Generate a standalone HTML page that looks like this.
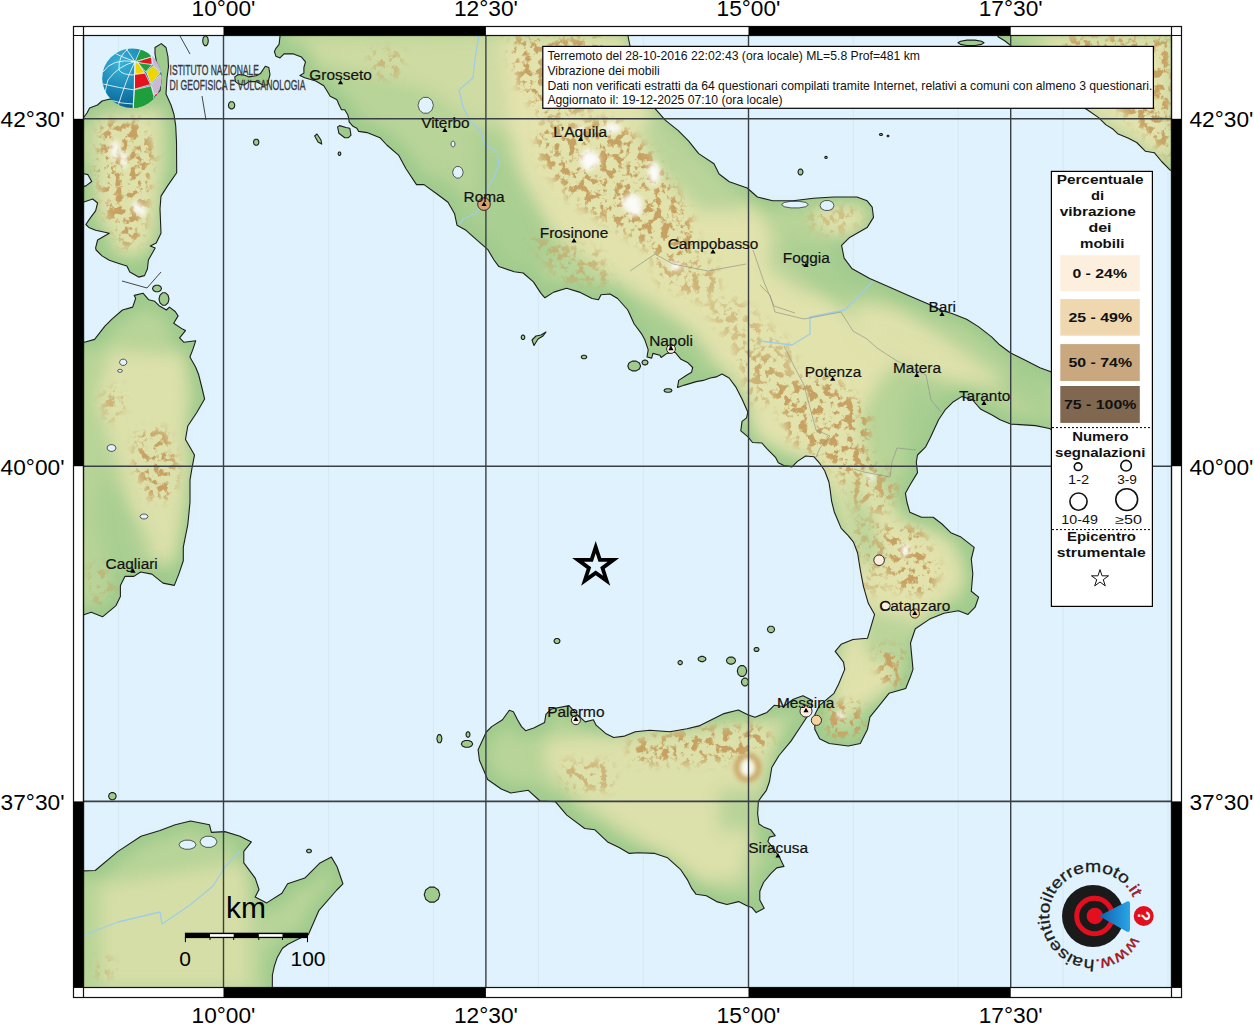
<!DOCTYPE html><html><head><meta charset="utf-8"><style>html,body{margin:0;padding:0;background:#fff;width:1254px;height:1024px;overflow:hidden}svg{position:absolute;left:0;top:0}text{font-family:"Liberation Sans",sans-serif}</style></head><body>
<svg width="1254" height="1024" viewBox="0 0 1254 1024">
<defs><clipPath id="mc"><rect x="83.5" y="35.5" width="1088" height="952"/></clipPath>
<filter id="inner" x="-5%" y="-5%" width="110%" height="110%"><feMorphology operator="erode" radius="7"/><feGaussianBlur stdDeviation="7"/></filter>
<filter id="bl3" x="-50%" y="-50%" width="200%" height="200%"><feGaussianBlur stdDeviation="2.5"/></filter><filter id="bl8" x="-50%" y="-50%" width="200%" height="200%"><feGaussianBlur stdDeviation="8"/></filter><filter id="shade" color-interpolation-filters="sRGB" x="0" y="0" width="1" height="1"><feTurbulence type="fractalNoise" baseFrequency="0.18" numOctaves="2" seed="11" result="n"/><feColorMatrix in="n" type="matrix" values="2.2 0 0 0 -0.6  2.2 0 0 0 -0.6  2.2 0 0 0 -0.6  0 0 0 0 1"/></filter><filter id="mtn" color-interpolation-filters="sRGB" x="-30%" y="-30%" width="160%" height="160%"><feGaussianBlur in="SourceAlpha" stdDeviation="5" result="b"/><feTurbulence type="fractalNoise" baseFrequency="0.13" numOctaves="4" seed="4" result="n"/><feColorMatrix in="n" type="matrix" values="0 0 0 0 0.78  0 0 0 0 0.63  0 0 0 0 0.38  8 0 0 0 -4.0" result="t"/><feComposite in="t" in2="b" operator="in"/></filter>
</defs>
<g clip-path="url(#mc)"><rect x="83" y="35" width="1090" height="954" fill="#e0f2fd"/>
<line x1="13.6" y1="35" x2="13.6" y2="988" stroke="#d6e8f0" stroke-width="1"/>
<line x1="118.5" y1="35" x2="118.5" y2="988" stroke="#d6e8f0" stroke-width="1"/>
<line x1="328.5" y1="35" x2="328.5" y2="988" stroke="#d6e8f0" stroke-width="1"/>
<line x1="433.4" y1="35" x2="433.4" y2="988" stroke="#d6e8f0" stroke-width="1"/>
<line x1="538.4" y1="35" x2="538.4" y2="988" stroke="#d6e8f0" stroke-width="1"/>
<line x1="643.3" y1="35" x2="643.3" y2="988" stroke="#d6e8f0" stroke-width="1"/>
<line x1="853.3" y1="35" x2="853.3" y2="988" stroke="#d6e8f0" stroke-width="1"/>
<line x1="958.2" y1="35" x2="958.2" y2="988" stroke="#d6e8f0" stroke-width="1"/>
<line x1="1063.2" y1="35" x2="1063.2" y2="988" stroke="#d6e8f0" stroke-width="1"/>
<line x1="1168.1" y1="35" x2="1168.1" y2="988" stroke="#d6e8f0" stroke-width="1"/>
<line x1="1273.1" y1="35" x2="1273.1" y2="988" stroke="#d6e8f0" stroke-width="1"/>
<line x1="1378.1" y1="35" x2="1378.1" y2="988" stroke="#d6e8f0" stroke-width="1"/>
<path d="M280.0,0.0 L280.0,36.4 L279.1,44.4 L276.0,48.3 L274.4,51.5 L276.0,56.3 L280.0,57.9 L284.0,53.9 L293.5,53.9 L301.5,57.1 L305.5,61.9 L303.9,67.5 L303.9,73.1 L299.9,75.5 L304.7,77.8 L315.8,81.0 L323.8,85.8 L327.8,92.2 L330.2,96.2 L336.6,99.4 L337.5,101.0 L338.9,104.6 L341.5,109.7 L344.7,109.7 L347.8,114.8 L348.8,118.6 L349.1,121.8 L353.0,126.3 L356.8,128.2 L358.7,131.4 L367.0,132.6 L380.0,137.7 L386.8,145.0 L398.8,155.4 L406.0,168.8 L416.5,184.6 L424.0,184.6 L438.0,194.7 L448.0,202.3 L454.6,213.8 L457.0,225.2 L466.0,230.3 L478.7,241.7 L487.6,249.3 L494.0,260.0 L498.9,266.6 L514.2,271.7 L523.2,273.0 L533.4,281.9 L541.0,293.4 L544.9,297.8 L553.8,292.1 L566.6,288.3 L579.3,292.1 L592.1,298.5 L598.5,299.8 L601.0,294.7 L610.0,294.0 L617.6,298.5 L627.8,310.0 L634.2,324.0 L641.8,334.2 L644.7,339.4 L648.2,349.9 L647.0,357.0 L651.7,358.1 L652.9,353.4 L659.9,355.2 L661.1,357.5 L667.0,353.4 L675.2,352.3 L681.0,359.3 L688.0,362.8 L692.7,367.5 L691.6,372.2 L685.7,375.7 L678.7,380.4 L677.5,387.4 L684.5,385.1 L696.3,381.6 L703.3,380.4 L710.3,378.0 L716.2,376.9 L722.0,374.0 L729.1,378.0 L736.1,387.4 L742.0,399.1 L747.8,412.0 L746.6,417.9 L742.0,421.4 L740.8,430.8 L747.8,436.6 L752.5,442.5 L761.9,443.0 L767.3,449.1 L775.5,457.3 L778.3,462.8 L783.8,465.5 L792.0,466.9 L797.4,461.4 L805.6,456.0 L813.8,456.7 L819.3,462.8 L824.8,471.0 L828.9,482.0 L830.2,490.2 L831.6,501.1 L834.3,512.0 L841.2,528.4 L848.0,535.3 L853.5,542.1 L857.6,553.0 L860.3,570.0 L863.5,586.6 L868.3,603.3 L874.6,614.4 L867.5,638.3 L853.0,639.5 L841.1,644.3 L835.2,651.4 L843.5,662.2 L844.7,669.4 L838.8,683.7 L834.0,693.3 L819.6,705.3 L814.8,714.8 L814.8,729.2 L819.6,738.8 L829.2,743.5 L848.3,746.0 L860.3,743.5 L867.5,729.2 L869.9,717.2 L879.4,705.3 L889.0,693.3 L905.7,688.5 L910.5,676.5 L913.0,669.4 L910.5,643.0 L915.3,628.7 L929.7,619.1 L944.0,613.2 L958.4,610.8 L968.0,614.4 L975.1,607.2 L978.6,597.1 L971.3,591.3 L972.8,573.7 L971.3,559.0 L974.2,547.4 L961.0,537.1 L950.8,532.7 L942.0,524.0 L933.2,517.3 L921.5,517.3 L909.8,512.2 L906.9,502.0 L905.4,493.2 L910.0,485.0 L917.5,472.6 L916.3,462.0 L917.5,455.0 L925.7,446.8 L930.4,437.4 L938.6,419.8 L945.6,409.3 L952.7,402.3 L962.0,396.4 L972.6,400.0 L980.8,409.3 L992.5,415.2 L1000.0,419.8 L1010.6,424.1 L1035.5,425.6 L1049.5,428.5 L1070.0,440.0 L1100.0,470.0 L1120.0,495.0 L1128.0,470.0 L1130.0,420.0 L1110.0,395.0 L1070.0,380.0 L1049.5,371.3 L1039.9,367.7 L1025.3,360.3 L1010.6,353.0 L998.9,344.2 L991.6,336.9 L978.4,326.6 L966.6,319.3 L952.0,313.5 L941.7,310.5 L928.3,304.1 L907.9,295.2 L887.5,286.3 L869.7,278.6 L851.8,268.4 L844.1,258.2 L841.6,245.4 L849.2,237.8 L867.1,227.6 L873.5,217.4 L872.2,207.2 L867.1,200.8 L856.9,197.0 L833.9,197.0 L813.5,198.2 L793.1,200.8 L772.7,200.8 L757.4,197.0 L747.2,188.0 L729.3,181.7 L719.1,174.0 L714.0,163.8 L698.7,153.6 L688.5,140.8 L678.3,130.6 L665.5,120.4 L655.3,108.9 L640.0,80.0 L630.0,46.0 L628.0,36.0 L628.0,0.0Z M998.0,0.0 L998.0,36.7 L1005.0,41.0 L1009.4,44.5 L1040.0,80.0 L1070.0,100.0 L1086.9,109.5 L1098.6,117.6 L1106.0,124.9 L1113.2,129.3 L1117.6,133.7 L1127.9,138.1 L1136.7,142.5 L1145.5,151.3 L1154.3,152.7 L1161.6,161.5 L1170.4,170.3 L1210.0,171.0 L1210.0,0.0Z M486.3,732.0 L491.7,726.6 L502.5,719.8 L509.3,710.3 L513.4,711.7 L517.5,719.8 L521.5,726.6 L525.6,730.7 L533.7,728.0 L544.6,722.5 L545.9,714.4 L551.3,709.0 L569.0,705.6 L577.1,714.4 L585.2,721.9 L593.4,719.8 L596.1,725.2 L605.6,733.4 L613.7,737.5 L624.6,736.1 L635.3,731.7 L649.7,730.2 L669.8,731.7 L687.0,728.8 L700.0,725.6 L712.0,719.6 L724.0,713.6 L738.3,710.0 L747.8,714.8 L755.0,717.2 L767.0,712.4 L774.2,705.3 L783.7,706.5 L793.3,699.3 L802.9,695.7 L812.4,700.5 L810.0,712.4 L800.5,726.8 L791.0,741.1 L779.0,755.5 L771.8,767.5 L769.4,781.8 L766.4,790.3 L762.0,796.1 L758.4,801.2 L757.6,813.7 L759.0,824.0 L763.5,826.9 L770.8,829.8 L775.2,835.7 L769.4,837.1 L767.9,841.5 L773.7,848.8 L779.6,857.6 L784.0,866.4 L776.7,867.9 L770.8,873.7 L763.5,882.5 L759.8,891.3 L759.8,900.1 L764.2,908.2 L756.2,912.6 L751.8,907.4 L747.4,906.0 L738.6,901.6 L726.9,904.5 L716.6,901.6 L706.4,895.7 L696.1,894.3 L691.7,888.4 L687.3,879.6 L680.4,869.3 L667.6,857.8 L654.8,853.4 L638.2,852.7 L629.3,853.4 L619.1,847.6 L607.6,841.9 L594.9,829.8 L584.7,828.5 L566.8,815.1 L555.3,801.7 L540.0,801.0 L528.3,790.3 L510.7,793.0 L501.2,789.0 L487.6,779.5 L483.6,770.0 L479.5,760.5 L478.1,749.7Z M40.0,342.0 L84.4,342.3 L94.6,339.4 L104.9,326.2 L112.2,318.8 L122.5,310.0 L132.7,307.1 L135.7,298.3 L134.2,295.4 L143.0,293.2 L148.8,299.8 L154.7,301.3 L159.1,305.7 L166.4,310.0 L169.4,307.1 L175.2,311.5 L178.1,315.9 L173.7,323.2 L182.5,329.1 L185.5,330.6 L179.6,337.9 L184.0,342.3 L195.7,340.8 L192.8,349.6 L189.9,357.0 L195.7,367.2 L198.6,374.5 L202.0,388.0 L204.6,399.0 L196.8,412.5 L187.8,426.0 L185.5,439.4 L194.5,455.1 L192.3,466.4 L190.0,479.8 L190.0,502.3 L187.8,524.7 L183.3,547.2 L183.3,560.7 L178.8,574.1 L174.3,585.4 L163.0,583.1 L151.9,574.1 L140.6,572.0 L133.9,576.4 L124.9,576.4 L120.4,585.4 L120.4,596.6 L116.0,605.6 L102.5,616.8 L91.2,612.3 L84.5,614.6 L40.0,614.6Z M40.0,117.0 L84.0,117.0 L87.0,113.0 L89.6,108.0 L97.5,105.0 L102.0,101.0 L110.0,99.0 L121.0,102.0 L147.0,99.0 L153.0,97.0 L160.0,90.6 L161.0,79.5 L160.0,71.5 L156.5,62.0 L155.0,54.0 L155.0,47.5 L161.3,43.6 L166.0,47.5 L168.0,57.0 L168.5,66.7 L167.0,78.0 L166.0,94.0 L171.0,105.0 L174.0,114.5 L175.7,125.7 L176.5,141.6 L176.6,157.6 L176.7,172.7 L167.9,185.4 L161.0,196.1 L160.0,208.8 L161.0,233.2 L156.2,243.0 L150.3,246.0 L155.2,247.9 L148.4,260.0 L147.4,269.0 L144.5,275.6 L138.6,277.1 L129.8,272.0 L126.9,266.1 L118.0,263.2 L109.3,260.3 L102.0,255.9 L96.1,250.0 L95.6,247.9 L97.6,240.0 L109.3,233.2 L95.6,230.3 L88.8,227.4 L85.9,224.5 L89.8,218.6 L95.6,210.8 L97.6,203.0 L92.7,199.0 L83.9,202.0 L40.0,202.0 L40.0,186.4 L83.9,186.4 L85.9,185.9 L91.7,181.5 L87.8,174.6 L83.9,173.7 L40.0,173.7Z M40.0,872.4 L95.2,870.5 L118.0,851.4 L141.0,836.2 L160.0,830.5 L175.2,824.8 L190.5,821.0 L209.5,824.8 L211.4,832.4 L224.8,831.6 L240.0,836.2 L251.4,841.9 L243.8,851.4 L243.8,862.9 L255.2,878.1 L259.0,889.5 L255.2,897.1 L266.7,902.9 L281.9,893.3 L287.6,883.8 L304.8,878.1 L320.0,862.9 L331.4,857.1 L337.1,866.7 L342.9,883.8 L336.8,890.0 L319.0,910.3 L308.3,934.7 L298.8,938.8 L288.0,944.2 L282.5,948.3 L277.1,957.8 L274.4,965.9 L272.4,975.0 L272.0,1030.0 L40.0,1030.0Z M234.8,76.9 L238.4,74.5 L244.2,75.1 L248.9,76.9 L256.0,75.7 L260.6,73.4 L265.3,66.3 L268.8,67.5 L270.0,74.5 L268.8,79.2 L267.7,85.0 L263.0,85.0 L256.0,81.6 L248.9,81.6 L244.2,85.0 L238.4,83.9 L235.4,81.6Z M208.3,40.8 L207.8,43.7 L206.4,45.6 L204.6,45.6 L203.2,43.7 L202.7,40.8 L203.2,37.9 L204.6,36.0 L206.4,36.0 L207.8,37.9Z M234.8,105.3 L234.2,107.5 L232.6,108.9 L230.6,108.9 L229.0,107.5 L228.4,105.3 L229.0,103.1 L230.6,101.7 L232.6,101.7 L234.2,103.1Z M258.9,142.2 L258.4,144.1 L257.0,145.2 L255.4,145.2 L254.0,144.1 L253.5,142.2 L254.0,140.3 L255.4,139.2 L257.0,139.2 L258.4,140.3Z M314.7,136.0 L317.0,134.0 L321.0,140.0 L321.7,144.1 L318.0,142.0Z M337.6,126.9 L339.6,125.6 L345.9,127.5 L349.8,128.2 L351.0,135.2 L348.5,137.7 L344.7,137.7 L338.9,133.3Z M340.8,153.7 L340.6,154.8 L339.9,155.4 L339.1,155.4 L338.4,154.8 L338.2,153.7 L338.4,152.6 L339.1,152.0 L339.9,152.0 L340.6,152.6Z M524.8,337.3 L524.5,338.7 L523.6,339.5 L522.4,339.5 L521.5,338.7 L521.2,337.3 L521.5,335.9 L522.4,335.1 L523.6,335.1 L524.5,335.9Z M532.0,340.0 L536.0,336.0 L541.0,335.0 L546.0,332.0 L543.0,336.0 L538.0,339.0 L534.0,345.5Z M586.8,357.0 L586.3,358.1 L584.9,358.7 L583.1,358.7 L581.7,358.1 L581.2,357.0 L581.7,355.9 L583.1,355.3 L584.9,355.3 L586.3,355.9Z M640.6,366.0 L639.4,369.0 L636.2,370.9 L632.2,370.9 L629.0,369.0 L627.8,366.0 L629.0,363.0 L632.2,361.1 L636.2,361.1 L639.4,363.0Z M648.0,362.5 L647.4,364.0 L645.9,364.9 L644.1,364.9 L642.6,364.0 L642.0,362.5 L642.6,361.0 L644.1,360.1 L645.9,360.1 L647.4,361.0Z M672.0,390.5 L671.2,391.6 L669.2,392.2 L666.8,392.2 L664.8,391.6 L664.0,390.5 L664.8,389.4 L666.8,388.8 L669.2,388.8 L671.2,389.4Z M560.0,641.0 L559.4,642.5 L557.9,643.5 L556.1,643.5 L554.6,642.5 L554.0,641.0 L554.6,639.5 L556.1,638.5 L557.9,638.5 L559.4,639.5Z M682.4,662.6 L682.0,663.8 L680.9,664.6 L679.5,664.6 L678.4,663.8 L678.0,662.6 L678.4,661.4 L679.5,660.6 L680.9,660.6 L682.0,661.4Z M706.0,659.0 L705.2,660.6 L703.2,661.6 L700.8,661.6 L698.8,660.6 L698.0,659.0 L698.8,657.4 L700.8,656.4 L703.2,656.4 L705.2,657.4Z M735.6,660.6 L734.7,662.8 L732.4,664.1 L729.6,664.1 L727.3,662.8 L726.4,660.6 L727.3,658.4 L729.6,657.1 L732.4,657.1 L734.7,658.4Z M746.7,671.0 L745.8,674.4 L743.5,676.4 L740.5,676.4 L738.2,674.4 L737.3,671.0 L738.2,667.6 L740.5,665.6 L743.5,665.6 L745.8,667.6Z M748.6,682.0 L747.9,684.4 L746.1,685.9 L743.9,685.9 L742.1,684.4 L741.4,682.0 L742.1,679.6 L743.9,678.1 L746.1,678.1 L747.9,679.6Z M759.0,649.5 L758.5,650.7 L757.3,651.4 L755.7,651.4 L754.5,650.7 L754.0,649.5 L754.5,648.3 L755.7,647.6 L757.3,647.6 L758.5,648.3Z M774.6,629.4 L773.9,631.4 L772.1,632.6 L769.9,632.6 L768.1,631.4 L767.4,629.4 L768.1,627.4 L769.9,626.2 L772.1,626.2 L773.9,627.4Z M441.9,738.7 L441.4,741.2 L440.2,742.8 L438.6,742.8 L437.4,741.2 L436.9,738.7 L437.4,736.2 L438.6,734.6 L440.2,734.6 L441.4,736.2Z M472.7,743.9 L471.6,746.0 L468.8,747.3 L465.2,747.3 L462.4,746.0 L461.3,743.9 L462.4,741.8 L465.2,740.5 L468.8,740.5 L471.6,741.8Z M470.0,734.5 L469.6,736.1 L468.6,737.2 L467.4,737.2 L466.4,736.1 L466.0,734.5 L466.4,732.9 L467.4,731.8 L468.6,731.8 L469.6,732.9Z M439.8,894.6 L438.3,899.2 L434.4,902.1 L429.6,902.1 L425.7,899.2 L424.2,894.6 L425.7,890.0 L429.6,887.1 L434.4,887.1 L438.3,890.0Z M803.0,172.0 L802.5,173.8 L801.3,174.9 L799.7,174.9 L798.5,173.8 L798.0,172.0 L798.5,170.2 L799.7,169.1 L801.3,169.1 L802.5,170.2Z M827.2,157.4 L827.0,158.0 L826.4,158.4 L825.6,158.4 L825.0,158.0 L824.8,157.4 L825.0,156.8 L825.6,156.4 L826.4,156.4 L827.0,156.8Z M882.6,134.5 L882.3,135.1 L881.5,135.5 L880.5,135.5 L879.7,135.1 L879.4,134.5 L879.7,133.9 L880.5,133.5 L881.5,133.5 L882.3,133.9Z M888.9,136.0 L888.7,136.5 L888.3,136.8 L887.7,136.8 L887.3,136.5 L887.1,136.0 L887.3,135.5 L887.7,135.2 L888.3,135.2 L888.7,135.5Z M116.2,796.2 L115.5,798.4 L113.6,799.8 L111.2,799.8 L109.3,798.4 L108.6,796.2 L109.3,794.0 L111.2,792.6 L113.6,792.6 L115.5,794.0Z M311.5,851.0 L311.0,852.1 L309.8,852.7 L308.2,852.7 L307.0,852.1 L306.5,851.0 L307.0,849.9 L308.2,849.3 L309.8,849.3 L311.0,849.9Z M161.5,288.5 L160.6,290.6 L158.4,291.8 L155.6,291.8 L153.4,290.6 L152.5,288.5 L153.4,286.4 L155.6,285.2 L158.4,285.2 L160.6,286.4Z M169.0,299.0 L168.0,302.8 L165.5,305.2 L162.5,305.2 L160.0,302.8 L159.0,299.0 L160.0,295.2 L162.5,292.8 L165.5,292.8 L168.0,295.2Z M984.0,42.8 L981.5,44.4 L975.0,45.5 L967.0,45.5 L960.5,44.4 L958.0,42.8 L960.5,41.2 L967.0,40.1 L975.0,40.1 L981.5,41.2Z M1191.0,0.0 L1190.8,0.6 L1190.3,1.0 L1189.7,1.0 L1189.2,0.6 L1189.0,0.0 L1189.2,-0.6 L1189.7,-1.0 L1190.3,-1.0 L1190.8,-0.6Z" fill="#9fcb8d"/>
<path d="M280.0,0.0 L280.0,36.4 L279.1,44.4 L276.0,48.3 L274.4,51.5 L276.0,56.3 L280.0,57.9 L284.0,53.9 L293.5,53.9 L301.5,57.1 L305.5,61.9 L303.9,67.5 L303.9,73.1 L299.9,75.5 L304.7,77.8 L315.8,81.0 L323.8,85.8 L327.8,92.2 L330.2,96.2 L336.6,99.4 L337.5,101.0 L338.9,104.6 L341.5,109.7 L344.7,109.7 L347.8,114.8 L348.8,118.6 L349.1,121.8 L353.0,126.3 L356.8,128.2 L358.7,131.4 L367.0,132.6 L380.0,137.7 L386.8,145.0 L398.8,155.4 L406.0,168.8 L416.5,184.6 L424.0,184.6 L438.0,194.7 L448.0,202.3 L454.6,213.8 L457.0,225.2 L466.0,230.3 L478.7,241.7 L487.6,249.3 L494.0,260.0 L498.9,266.6 L514.2,271.7 L523.2,273.0 L533.4,281.9 L541.0,293.4 L544.9,297.8 L553.8,292.1 L566.6,288.3 L579.3,292.1 L592.1,298.5 L598.5,299.8 L601.0,294.7 L610.0,294.0 L617.6,298.5 L627.8,310.0 L634.2,324.0 L641.8,334.2 L644.7,339.4 L648.2,349.9 L647.0,357.0 L651.7,358.1 L652.9,353.4 L659.9,355.2 L661.1,357.5 L667.0,353.4 L675.2,352.3 L681.0,359.3 L688.0,362.8 L692.7,367.5 L691.6,372.2 L685.7,375.7 L678.7,380.4 L677.5,387.4 L684.5,385.1 L696.3,381.6 L703.3,380.4 L710.3,378.0 L716.2,376.9 L722.0,374.0 L729.1,378.0 L736.1,387.4 L742.0,399.1 L747.8,412.0 L746.6,417.9 L742.0,421.4 L740.8,430.8 L747.8,436.6 L752.5,442.5 L761.9,443.0 L767.3,449.1 L775.5,457.3 L778.3,462.8 L783.8,465.5 L792.0,466.9 L797.4,461.4 L805.6,456.0 L813.8,456.7 L819.3,462.8 L824.8,471.0 L828.9,482.0 L830.2,490.2 L831.6,501.1 L834.3,512.0 L841.2,528.4 L848.0,535.3 L853.5,542.1 L857.6,553.0 L860.3,570.0 L863.5,586.6 L868.3,603.3 L874.6,614.4 L867.5,638.3 L853.0,639.5 L841.1,644.3 L835.2,651.4 L843.5,662.2 L844.7,669.4 L838.8,683.7 L834.0,693.3 L819.6,705.3 L814.8,714.8 L814.8,729.2 L819.6,738.8 L829.2,743.5 L848.3,746.0 L860.3,743.5 L867.5,729.2 L869.9,717.2 L879.4,705.3 L889.0,693.3 L905.7,688.5 L910.5,676.5 L913.0,669.4 L910.5,643.0 L915.3,628.7 L929.7,619.1 L944.0,613.2 L958.4,610.8 L968.0,614.4 L975.1,607.2 L978.6,597.1 L971.3,591.3 L972.8,573.7 L971.3,559.0 L974.2,547.4 L961.0,537.1 L950.8,532.7 L942.0,524.0 L933.2,517.3 L921.5,517.3 L909.8,512.2 L906.9,502.0 L905.4,493.2 L910.0,485.0 L917.5,472.6 L916.3,462.0 L917.5,455.0 L925.7,446.8 L930.4,437.4 L938.6,419.8 L945.6,409.3 L952.7,402.3 L962.0,396.4 L972.6,400.0 L980.8,409.3 L992.5,415.2 L1000.0,419.8 L1010.6,424.1 L1035.5,425.6 L1049.5,428.5 L1070.0,440.0 L1100.0,470.0 L1120.0,495.0 L1128.0,470.0 L1130.0,420.0 L1110.0,395.0 L1070.0,380.0 L1049.5,371.3 L1039.9,367.7 L1025.3,360.3 L1010.6,353.0 L998.9,344.2 L991.6,336.9 L978.4,326.6 L966.6,319.3 L952.0,313.5 L941.7,310.5 L928.3,304.1 L907.9,295.2 L887.5,286.3 L869.7,278.6 L851.8,268.4 L844.1,258.2 L841.6,245.4 L849.2,237.8 L867.1,227.6 L873.5,217.4 L872.2,207.2 L867.1,200.8 L856.9,197.0 L833.9,197.0 L813.5,198.2 L793.1,200.8 L772.7,200.8 L757.4,197.0 L747.2,188.0 L729.3,181.7 L719.1,174.0 L714.0,163.8 L698.7,153.6 L688.5,140.8 L678.3,130.6 L665.5,120.4 L655.3,108.9 L640.0,80.0 L630.0,46.0 L628.0,36.0 L628.0,0.0Z M998.0,0.0 L998.0,36.7 L1005.0,41.0 L1009.4,44.5 L1040.0,80.0 L1070.0,100.0 L1086.9,109.5 L1098.6,117.6 L1106.0,124.9 L1113.2,129.3 L1117.6,133.7 L1127.9,138.1 L1136.7,142.5 L1145.5,151.3 L1154.3,152.7 L1161.6,161.5 L1170.4,170.3 L1210.0,171.0 L1210.0,0.0Z M486.3,732.0 L491.7,726.6 L502.5,719.8 L509.3,710.3 L513.4,711.7 L517.5,719.8 L521.5,726.6 L525.6,730.7 L533.7,728.0 L544.6,722.5 L545.9,714.4 L551.3,709.0 L569.0,705.6 L577.1,714.4 L585.2,721.9 L593.4,719.8 L596.1,725.2 L605.6,733.4 L613.7,737.5 L624.6,736.1 L635.3,731.7 L649.7,730.2 L669.8,731.7 L687.0,728.8 L700.0,725.6 L712.0,719.6 L724.0,713.6 L738.3,710.0 L747.8,714.8 L755.0,717.2 L767.0,712.4 L774.2,705.3 L783.7,706.5 L793.3,699.3 L802.9,695.7 L812.4,700.5 L810.0,712.4 L800.5,726.8 L791.0,741.1 L779.0,755.5 L771.8,767.5 L769.4,781.8 L766.4,790.3 L762.0,796.1 L758.4,801.2 L757.6,813.7 L759.0,824.0 L763.5,826.9 L770.8,829.8 L775.2,835.7 L769.4,837.1 L767.9,841.5 L773.7,848.8 L779.6,857.6 L784.0,866.4 L776.7,867.9 L770.8,873.7 L763.5,882.5 L759.8,891.3 L759.8,900.1 L764.2,908.2 L756.2,912.6 L751.8,907.4 L747.4,906.0 L738.6,901.6 L726.9,904.5 L716.6,901.6 L706.4,895.7 L696.1,894.3 L691.7,888.4 L687.3,879.6 L680.4,869.3 L667.6,857.8 L654.8,853.4 L638.2,852.7 L629.3,853.4 L619.1,847.6 L607.6,841.9 L594.9,829.8 L584.7,828.5 L566.8,815.1 L555.3,801.7 L540.0,801.0 L528.3,790.3 L510.7,793.0 L501.2,789.0 L487.6,779.5 L483.6,770.0 L479.5,760.5 L478.1,749.7Z M40.0,342.0 L84.4,342.3 L94.6,339.4 L104.9,326.2 L112.2,318.8 L122.5,310.0 L132.7,307.1 L135.7,298.3 L134.2,295.4 L143.0,293.2 L148.8,299.8 L154.7,301.3 L159.1,305.7 L166.4,310.0 L169.4,307.1 L175.2,311.5 L178.1,315.9 L173.7,323.2 L182.5,329.1 L185.5,330.6 L179.6,337.9 L184.0,342.3 L195.7,340.8 L192.8,349.6 L189.9,357.0 L195.7,367.2 L198.6,374.5 L202.0,388.0 L204.6,399.0 L196.8,412.5 L187.8,426.0 L185.5,439.4 L194.5,455.1 L192.3,466.4 L190.0,479.8 L190.0,502.3 L187.8,524.7 L183.3,547.2 L183.3,560.7 L178.8,574.1 L174.3,585.4 L163.0,583.1 L151.9,574.1 L140.6,572.0 L133.9,576.4 L124.9,576.4 L120.4,585.4 L120.4,596.6 L116.0,605.6 L102.5,616.8 L91.2,612.3 L84.5,614.6 L40.0,614.6Z M40.0,117.0 L84.0,117.0 L87.0,113.0 L89.6,108.0 L97.5,105.0 L102.0,101.0 L110.0,99.0 L121.0,102.0 L147.0,99.0 L153.0,97.0 L160.0,90.6 L161.0,79.5 L160.0,71.5 L156.5,62.0 L155.0,54.0 L155.0,47.5 L161.3,43.6 L166.0,47.5 L168.0,57.0 L168.5,66.7 L167.0,78.0 L166.0,94.0 L171.0,105.0 L174.0,114.5 L175.7,125.7 L176.5,141.6 L176.6,157.6 L176.7,172.7 L167.9,185.4 L161.0,196.1 L160.0,208.8 L161.0,233.2 L156.2,243.0 L150.3,246.0 L155.2,247.9 L148.4,260.0 L147.4,269.0 L144.5,275.6 L138.6,277.1 L129.8,272.0 L126.9,266.1 L118.0,263.2 L109.3,260.3 L102.0,255.9 L96.1,250.0 L95.6,247.9 L97.6,240.0 L109.3,233.2 L95.6,230.3 L88.8,227.4 L85.9,224.5 L89.8,218.6 L95.6,210.8 L97.6,203.0 L92.7,199.0 L83.9,202.0 L40.0,202.0 L40.0,186.4 L83.9,186.4 L85.9,185.9 L91.7,181.5 L87.8,174.6 L83.9,173.7 L40.0,173.7Z M40.0,872.4 L95.2,870.5 L118.0,851.4 L141.0,836.2 L160.0,830.5 L175.2,824.8 L190.5,821.0 L209.5,824.8 L211.4,832.4 L224.8,831.6 L240.0,836.2 L251.4,841.9 L243.8,851.4 L243.8,862.9 L255.2,878.1 L259.0,889.5 L255.2,897.1 L266.7,902.9 L281.9,893.3 L287.6,883.8 L304.8,878.1 L320.0,862.9 L331.4,857.1 L337.1,866.7 L342.9,883.8 L336.8,890.0 L319.0,910.3 L308.3,934.7 L298.8,938.8 L288.0,944.2 L282.5,948.3 L277.1,957.8 L274.4,965.9 L272.4,975.0 L272.0,1030.0 L40.0,1030.0Z M234.8,76.9 L238.4,74.5 L244.2,75.1 L248.9,76.9 L256.0,75.7 L260.6,73.4 L265.3,66.3 L268.8,67.5 L270.0,74.5 L268.8,79.2 L267.7,85.0 L263.0,85.0 L256.0,81.6 L248.9,81.6 L244.2,85.0 L238.4,83.9 L235.4,81.6Z M208.3,40.8 L207.8,43.7 L206.4,45.6 L204.6,45.6 L203.2,43.7 L202.7,40.8 L203.2,37.9 L204.6,36.0 L206.4,36.0 L207.8,37.9Z M234.8,105.3 L234.2,107.5 L232.6,108.9 L230.6,108.9 L229.0,107.5 L228.4,105.3 L229.0,103.1 L230.6,101.7 L232.6,101.7 L234.2,103.1Z M258.9,142.2 L258.4,144.1 L257.0,145.2 L255.4,145.2 L254.0,144.1 L253.5,142.2 L254.0,140.3 L255.4,139.2 L257.0,139.2 L258.4,140.3Z M314.7,136.0 L317.0,134.0 L321.0,140.0 L321.7,144.1 L318.0,142.0Z M337.6,126.9 L339.6,125.6 L345.9,127.5 L349.8,128.2 L351.0,135.2 L348.5,137.7 L344.7,137.7 L338.9,133.3Z M340.8,153.7 L340.6,154.8 L339.9,155.4 L339.1,155.4 L338.4,154.8 L338.2,153.7 L338.4,152.6 L339.1,152.0 L339.9,152.0 L340.6,152.6Z M524.8,337.3 L524.5,338.7 L523.6,339.5 L522.4,339.5 L521.5,338.7 L521.2,337.3 L521.5,335.9 L522.4,335.1 L523.6,335.1 L524.5,335.9Z M532.0,340.0 L536.0,336.0 L541.0,335.0 L546.0,332.0 L543.0,336.0 L538.0,339.0 L534.0,345.5Z M586.8,357.0 L586.3,358.1 L584.9,358.7 L583.1,358.7 L581.7,358.1 L581.2,357.0 L581.7,355.9 L583.1,355.3 L584.9,355.3 L586.3,355.9Z M640.6,366.0 L639.4,369.0 L636.2,370.9 L632.2,370.9 L629.0,369.0 L627.8,366.0 L629.0,363.0 L632.2,361.1 L636.2,361.1 L639.4,363.0Z M648.0,362.5 L647.4,364.0 L645.9,364.9 L644.1,364.9 L642.6,364.0 L642.0,362.5 L642.6,361.0 L644.1,360.1 L645.9,360.1 L647.4,361.0Z M672.0,390.5 L671.2,391.6 L669.2,392.2 L666.8,392.2 L664.8,391.6 L664.0,390.5 L664.8,389.4 L666.8,388.8 L669.2,388.8 L671.2,389.4Z M560.0,641.0 L559.4,642.5 L557.9,643.5 L556.1,643.5 L554.6,642.5 L554.0,641.0 L554.6,639.5 L556.1,638.5 L557.9,638.5 L559.4,639.5Z M682.4,662.6 L682.0,663.8 L680.9,664.6 L679.5,664.6 L678.4,663.8 L678.0,662.6 L678.4,661.4 L679.5,660.6 L680.9,660.6 L682.0,661.4Z M706.0,659.0 L705.2,660.6 L703.2,661.6 L700.8,661.6 L698.8,660.6 L698.0,659.0 L698.8,657.4 L700.8,656.4 L703.2,656.4 L705.2,657.4Z M735.6,660.6 L734.7,662.8 L732.4,664.1 L729.6,664.1 L727.3,662.8 L726.4,660.6 L727.3,658.4 L729.6,657.1 L732.4,657.1 L734.7,658.4Z M746.7,671.0 L745.8,674.4 L743.5,676.4 L740.5,676.4 L738.2,674.4 L737.3,671.0 L738.2,667.6 L740.5,665.6 L743.5,665.6 L745.8,667.6Z M748.6,682.0 L747.9,684.4 L746.1,685.9 L743.9,685.9 L742.1,684.4 L741.4,682.0 L742.1,679.6 L743.9,678.1 L746.1,678.1 L747.9,679.6Z M759.0,649.5 L758.5,650.7 L757.3,651.4 L755.7,651.4 L754.5,650.7 L754.0,649.5 L754.5,648.3 L755.7,647.6 L757.3,647.6 L758.5,648.3Z M774.6,629.4 L773.9,631.4 L772.1,632.6 L769.9,632.6 L768.1,631.4 L767.4,629.4 L768.1,627.4 L769.9,626.2 L772.1,626.2 L773.9,627.4Z M441.9,738.7 L441.4,741.2 L440.2,742.8 L438.6,742.8 L437.4,741.2 L436.9,738.7 L437.4,736.2 L438.6,734.6 L440.2,734.6 L441.4,736.2Z M472.7,743.9 L471.6,746.0 L468.8,747.3 L465.2,747.3 L462.4,746.0 L461.3,743.9 L462.4,741.8 L465.2,740.5 L468.8,740.5 L471.6,741.8Z M470.0,734.5 L469.6,736.1 L468.6,737.2 L467.4,737.2 L466.4,736.1 L466.0,734.5 L466.4,732.9 L467.4,731.8 L468.6,731.8 L469.6,732.9Z M439.8,894.6 L438.3,899.2 L434.4,902.1 L429.6,902.1 L425.7,899.2 L424.2,894.6 L425.7,890.0 L429.6,887.1 L434.4,887.1 L438.3,890.0Z M803.0,172.0 L802.5,173.8 L801.3,174.9 L799.7,174.9 L798.5,173.8 L798.0,172.0 L798.5,170.2 L799.7,169.1 L801.3,169.1 L802.5,170.2Z M827.2,157.4 L827.0,158.0 L826.4,158.4 L825.6,158.4 L825.0,158.0 L824.8,157.4 L825.0,156.8 L825.6,156.4 L826.4,156.4 L827.0,156.8Z M882.6,134.5 L882.3,135.1 L881.5,135.5 L880.5,135.5 L879.7,135.1 L879.4,134.5 L879.7,133.9 L880.5,133.5 L881.5,133.5 L882.3,133.9Z M888.9,136.0 L888.7,136.5 L888.3,136.8 L887.7,136.8 L887.3,136.5 L887.1,136.0 L887.3,135.5 L887.7,135.2 L888.3,135.2 L888.7,135.5Z M116.2,796.2 L115.5,798.4 L113.6,799.8 L111.2,799.8 L109.3,798.4 L108.6,796.2 L109.3,794.0 L111.2,792.6 L113.6,792.6 L115.5,794.0Z M311.5,851.0 L311.0,852.1 L309.8,852.7 L308.2,852.7 L307.0,852.1 L306.5,851.0 L307.0,849.9 L308.2,849.3 L309.8,849.3 L311.0,849.9Z M161.5,288.5 L160.6,290.6 L158.4,291.8 L155.6,291.8 L153.4,290.6 L152.5,288.5 L153.4,286.4 L155.6,285.2 L158.4,285.2 L160.6,286.4Z M169.0,299.0 L168.0,302.8 L165.5,305.2 L162.5,305.2 L160.0,302.8 L159.0,299.0 L160.0,295.2 L162.5,292.8 L165.5,292.8 L168.0,295.2Z M984.0,42.8 L981.5,44.4 L975.0,45.5 L967.0,45.5 L960.5,44.4 L958.0,42.8 L960.5,41.2 L967.0,40.1 L975.0,40.1 L981.5,41.2Z M1191.0,0.0 L1190.8,0.6 L1190.3,1.0 L1189.7,1.0 L1189.2,0.6 L1189.0,0.0 L1189.2,-0.6 L1189.7,-1.0 L1190.3,-1.0 L1190.8,-0.6Z" fill="#cddca2" opacity="0.55" filter="url(#inner)"/>
<clipPath id="landclip"><path d="M280.0,0.0 L280.0,36.4 L279.1,44.4 L276.0,48.3 L274.4,51.5 L276.0,56.3 L280.0,57.9 L284.0,53.9 L293.5,53.9 L301.5,57.1 L305.5,61.9 L303.9,67.5 L303.9,73.1 L299.9,75.5 L304.7,77.8 L315.8,81.0 L323.8,85.8 L327.8,92.2 L330.2,96.2 L336.6,99.4 L337.5,101.0 L338.9,104.6 L341.5,109.7 L344.7,109.7 L347.8,114.8 L348.8,118.6 L349.1,121.8 L353.0,126.3 L356.8,128.2 L358.7,131.4 L367.0,132.6 L380.0,137.7 L386.8,145.0 L398.8,155.4 L406.0,168.8 L416.5,184.6 L424.0,184.6 L438.0,194.7 L448.0,202.3 L454.6,213.8 L457.0,225.2 L466.0,230.3 L478.7,241.7 L487.6,249.3 L494.0,260.0 L498.9,266.6 L514.2,271.7 L523.2,273.0 L533.4,281.9 L541.0,293.4 L544.9,297.8 L553.8,292.1 L566.6,288.3 L579.3,292.1 L592.1,298.5 L598.5,299.8 L601.0,294.7 L610.0,294.0 L617.6,298.5 L627.8,310.0 L634.2,324.0 L641.8,334.2 L644.7,339.4 L648.2,349.9 L647.0,357.0 L651.7,358.1 L652.9,353.4 L659.9,355.2 L661.1,357.5 L667.0,353.4 L675.2,352.3 L681.0,359.3 L688.0,362.8 L692.7,367.5 L691.6,372.2 L685.7,375.7 L678.7,380.4 L677.5,387.4 L684.5,385.1 L696.3,381.6 L703.3,380.4 L710.3,378.0 L716.2,376.9 L722.0,374.0 L729.1,378.0 L736.1,387.4 L742.0,399.1 L747.8,412.0 L746.6,417.9 L742.0,421.4 L740.8,430.8 L747.8,436.6 L752.5,442.5 L761.9,443.0 L767.3,449.1 L775.5,457.3 L778.3,462.8 L783.8,465.5 L792.0,466.9 L797.4,461.4 L805.6,456.0 L813.8,456.7 L819.3,462.8 L824.8,471.0 L828.9,482.0 L830.2,490.2 L831.6,501.1 L834.3,512.0 L841.2,528.4 L848.0,535.3 L853.5,542.1 L857.6,553.0 L860.3,570.0 L863.5,586.6 L868.3,603.3 L874.6,614.4 L867.5,638.3 L853.0,639.5 L841.1,644.3 L835.2,651.4 L843.5,662.2 L844.7,669.4 L838.8,683.7 L834.0,693.3 L819.6,705.3 L814.8,714.8 L814.8,729.2 L819.6,738.8 L829.2,743.5 L848.3,746.0 L860.3,743.5 L867.5,729.2 L869.9,717.2 L879.4,705.3 L889.0,693.3 L905.7,688.5 L910.5,676.5 L913.0,669.4 L910.5,643.0 L915.3,628.7 L929.7,619.1 L944.0,613.2 L958.4,610.8 L968.0,614.4 L975.1,607.2 L978.6,597.1 L971.3,591.3 L972.8,573.7 L971.3,559.0 L974.2,547.4 L961.0,537.1 L950.8,532.7 L942.0,524.0 L933.2,517.3 L921.5,517.3 L909.8,512.2 L906.9,502.0 L905.4,493.2 L910.0,485.0 L917.5,472.6 L916.3,462.0 L917.5,455.0 L925.7,446.8 L930.4,437.4 L938.6,419.8 L945.6,409.3 L952.7,402.3 L962.0,396.4 L972.6,400.0 L980.8,409.3 L992.5,415.2 L1000.0,419.8 L1010.6,424.1 L1035.5,425.6 L1049.5,428.5 L1070.0,440.0 L1100.0,470.0 L1120.0,495.0 L1128.0,470.0 L1130.0,420.0 L1110.0,395.0 L1070.0,380.0 L1049.5,371.3 L1039.9,367.7 L1025.3,360.3 L1010.6,353.0 L998.9,344.2 L991.6,336.9 L978.4,326.6 L966.6,319.3 L952.0,313.5 L941.7,310.5 L928.3,304.1 L907.9,295.2 L887.5,286.3 L869.7,278.6 L851.8,268.4 L844.1,258.2 L841.6,245.4 L849.2,237.8 L867.1,227.6 L873.5,217.4 L872.2,207.2 L867.1,200.8 L856.9,197.0 L833.9,197.0 L813.5,198.2 L793.1,200.8 L772.7,200.8 L757.4,197.0 L747.2,188.0 L729.3,181.7 L719.1,174.0 L714.0,163.8 L698.7,153.6 L688.5,140.8 L678.3,130.6 L665.5,120.4 L655.3,108.9 L640.0,80.0 L630.0,46.0 L628.0,36.0 L628.0,0.0Z M998.0,0.0 L998.0,36.7 L1005.0,41.0 L1009.4,44.5 L1040.0,80.0 L1070.0,100.0 L1086.9,109.5 L1098.6,117.6 L1106.0,124.9 L1113.2,129.3 L1117.6,133.7 L1127.9,138.1 L1136.7,142.5 L1145.5,151.3 L1154.3,152.7 L1161.6,161.5 L1170.4,170.3 L1210.0,171.0 L1210.0,0.0Z M486.3,732.0 L491.7,726.6 L502.5,719.8 L509.3,710.3 L513.4,711.7 L517.5,719.8 L521.5,726.6 L525.6,730.7 L533.7,728.0 L544.6,722.5 L545.9,714.4 L551.3,709.0 L569.0,705.6 L577.1,714.4 L585.2,721.9 L593.4,719.8 L596.1,725.2 L605.6,733.4 L613.7,737.5 L624.6,736.1 L635.3,731.7 L649.7,730.2 L669.8,731.7 L687.0,728.8 L700.0,725.6 L712.0,719.6 L724.0,713.6 L738.3,710.0 L747.8,714.8 L755.0,717.2 L767.0,712.4 L774.2,705.3 L783.7,706.5 L793.3,699.3 L802.9,695.7 L812.4,700.5 L810.0,712.4 L800.5,726.8 L791.0,741.1 L779.0,755.5 L771.8,767.5 L769.4,781.8 L766.4,790.3 L762.0,796.1 L758.4,801.2 L757.6,813.7 L759.0,824.0 L763.5,826.9 L770.8,829.8 L775.2,835.7 L769.4,837.1 L767.9,841.5 L773.7,848.8 L779.6,857.6 L784.0,866.4 L776.7,867.9 L770.8,873.7 L763.5,882.5 L759.8,891.3 L759.8,900.1 L764.2,908.2 L756.2,912.6 L751.8,907.4 L747.4,906.0 L738.6,901.6 L726.9,904.5 L716.6,901.6 L706.4,895.7 L696.1,894.3 L691.7,888.4 L687.3,879.6 L680.4,869.3 L667.6,857.8 L654.8,853.4 L638.2,852.7 L629.3,853.4 L619.1,847.6 L607.6,841.9 L594.9,829.8 L584.7,828.5 L566.8,815.1 L555.3,801.7 L540.0,801.0 L528.3,790.3 L510.7,793.0 L501.2,789.0 L487.6,779.5 L483.6,770.0 L479.5,760.5 L478.1,749.7Z M40.0,342.0 L84.4,342.3 L94.6,339.4 L104.9,326.2 L112.2,318.8 L122.5,310.0 L132.7,307.1 L135.7,298.3 L134.2,295.4 L143.0,293.2 L148.8,299.8 L154.7,301.3 L159.1,305.7 L166.4,310.0 L169.4,307.1 L175.2,311.5 L178.1,315.9 L173.7,323.2 L182.5,329.1 L185.5,330.6 L179.6,337.9 L184.0,342.3 L195.7,340.8 L192.8,349.6 L189.9,357.0 L195.7,367.2 L198.6,374.5 L202.0,388.0 L204.6,399.0 L196.8,412.5 L187.8,426.0 L185.5,439.4 L194.5,455.1 L192.3,466.4 L190.0,479.8 L190.0,502.3 L187.8,524.7 L183.3,547.2 L183.3,560.7 L178.8,574.1 L174.3,585.4 L163.0,583.1 L151.9,574.1 L140.6,572.0 L133.9,576.4 L124.9,576.4 L120.4,585.4 L120.4,596.6 L116.0,605.6 L102.5,616.8 L91.2,612.3 L84.5,614.6 L40.0,614.6Z M40.0,117.0 L84.0,117.0 L87.0,113.0 L89.6,108.0 L97.5,105.0 L102.0,101.0 L110.0,99.0 L121.0,102.0 L147.0,99.0 L153.0,97.0 L160.0,90.6 L161.0,79.5 L160.0,71.5 L156.5,62.0 L155.0,54.0 L155.0,47.5 L161.3,43.6 L166.0,47.5 L168.0,57.0 L168.5,66.7 L167.0,78.0 L166.0,94.0 L171.0,105.0 L174.0,114.5 L175.7,125.7 L176.5,141.6 L176.6,157.6 L176.7,172.7 L167.9,185.4 L161.0,196.1 L160.0,208.8 L161.0,233.2 L156.2,243.0 L150.3,246.0 L155.2,247.9 L148.4,260.0 L147.4,269.0 L144.5,275.6 L138.6,277.1 L129.8,272.0 L126.9,266.1 L118.0,263.2 L109.3,260.3 L102.0,255.9 L96.1,250.0 L95.6,247.9 L97.6,240.0 L109.3,233.2 L95.6,230.3 L88.8,227.4 L85.9,224.5 L89.8,218.6 L95.6,210.8 L97.6,203.0 L92.7,199.0 L83.9,202.0 L40.0,202.0 L40.0,186.4 L83.9,186.4 L85.9,185.9 L91.7,181.5 L87.8,174.6 L83.9,173.7 L40.0,173.7Z M40.0,872.4 L95.2,870.5 L118.0,851.4 L141.0,836.2 L160.0,830.5 L175.2,824.8 L190.5,821.0 L209.5,824.8 L211.4,832.4 L224.8,831.6 L240.0,836.2 L251.4,841.9 L243.8,851.4 L243.8,862.9 L255.2,878.1 L259.0,889.5 L255.2,897.1 L266.7,902.9 L281.9,893.3 L287.6,883.8 L304.8,878.1 L320.0,862.9 L331.4,857.1 L337.1,866.7 L342.9,883.8 L336.8,890.0 L319.0,910.3 L308.3,934.7 L298.8,938.8 L288.0,944.2 L282.5,948.3 L277.1,957.8 L274.4,965.9 L272.4,975.0 L272.0,1030.0 L40.0,1030.0Z M234.8,76.9 L238.4,74.5 L244.2,75.1 L248.9,76.9 L256.0,75.7 L260.6,73.4 L265.3,66.3 L268.8,67.5 L270.0,74.5 L268.8,79.2 L267.7,85.0 L263.0,85.0 L256.0,81.6 L248.9,81.6 L244.2,85.0 L238.4,83.9 L235.4,81.6Z M208.3,40.8 L207.8,43.7 L206.4,45.6 L204.6,45.6 L203.2,43.7 L202.7,40.8 L203.2,37.9 L204.6,36.0 L206.4,36.0 L207.8,37.9Z M234.8,105.3 L234.2,107.5 L232.6,108.9 L230.6,108.9 L229.0,107.5 L228.4,105.3 L229.0,103.1 L230.6,101.7 L232.6,101.7 L234.2,103.1Z M258.9,142.2 L258.4,144.1 L257.0,145.2 L255.4,145.2 L254.0,144.1 L253.5,142.2 L254.0,140.3 L255.4,139.2 L257.0,139.2 L258.4,140.3Z M314.7,136.0 L317.0,134.0 L321.0,140.0 L321.7,144.1 L318.0,142.0Z M337.6,126.9 L339.6,125.6 L345.9,127.5 L349.8,128.2 L351.0,135.2 L348.5,137.7 L344.7,137.7 L338.9,133.3Z M340.8,153.7 L340.6,154.8 L339.9,155.4 L339.1,155.4 L338.4,154.8 L338.2,153.7 L338.4,152.6 L339.1,152.0 L339.9,152.0 L340.6,152.6Z M524.8,337.3 L524.5,338.7 L523.6,339.5 L522.4,339.5 L521.5,338.7 L521.2,337.3 L521.5,335.9 L522.4,335.1 L523.6,335.1 L524.5,335.9Z M532.0,340.0 L536.0,336.0 L541.0,335.0 L546.0,332.0 L543.0,336.0 L538.0,339.0 L534.0,345.5Z M586.8,357.0 L586.3,358.1 L584.9,358.7 L583.1,358.7 L581.7,358.1 L581.2,357.0 L581.7,355.9 L583.1,355.3 L584.9,355.3 L586.3,355.9Z M640.6,366.0 L639.4,369.0 L636.2,370.9 L632.2,370.9 L629.0,369.0 L627.8,366.0 L629.0,363.0 L632.2,361.1 L636.2,361.1 L639.4,363.0Z M648.0,362.5 L647.4,364.0 L645.9,364.9 L644.1,364.9 L642.6,364.0 L642.0,362.5 L642.6,361.0 L644.1,360.1 L645.9,360.1 L647.4,361.0Z M672.0,390.5 L671.2,391.6 L669.2,392.2 L666.8,392.2 L664.8,391.6 L664.0,390.5 L664.8,389.4 L666.8,388.8 L669.2,388.8 L671.2,389.4Z M560.0,641.0 L559.4,642.5 L557.9,643.5 L556.1,643.5 L554.6,642.5 L554.0,641.0 L554.6,639.5 L556.1,638.5 L557.9,638.5 L559.4,639.5Z M682.4,662.6 L682.0,663.8 L680.9,664.6 L679.5,664.6 L678.4,663.8 L678.0,662.6 L678.4,661.4 L679.5,660.6 L680.9,660.6 L682.0,661.4Z M706.0,659.0 L705.2,660.6 L703.2,661.6 L700.8,661.6 L698.8,660.6 L698.0,659.0 L698.8,657.4 L700.8,656.4 L703.2,656.4 L705.2,657.4Z M735.6,660.6 L734.7,662.8 L732.4,664.1 L729.6,664.1 L727.3,662.8 L726.4,660.6 L727.3,658.4 L729.6,657.1 L732.4,657.1 L734.7,658.4Z M746.7,671.0 L745.8,674.4 L743.5,676.4 L740.5,676.4 L738.2,674.4 L737.3,671.0 L738.2,667.6 L740.5,665.6 L743.5,665.6 L745.8,667.6Z M748.6,682.0 L747.9,684.4 L746.1,685.9 L743.9,685.9 L742.1,684.4 L741.4,682.0 L742.1,679.6 L743.9,678.1 L746.1,678.1 L747.9,679.6Z M759.0,649.5 L758.5,650.7 L757.3,651.4 L755.7,651.4 L754.5,650.7 L754.0,649.5 L754.5,648.3 L755.7,647.6 L757.3,647.6 L758.5,648.3Z M774.6,629.4 L773.9,631.4 L772.1,632.6 L769.9,632.6 L768.1,631.4 L767.4,629.4 L768.1,627.4 L769.9,626.2 L772.1,626.2 L773.9,627.4Z M441.9,738.7 L441.4,741.2 L440.2,742.8 L438.6,742.8 L437.4,741.2 L436.9,738.7 L437.4,736.2 L438.6,734.6 L440.2,734.6 L441.4,736.2Z M472.7,743.9 L471.6,746.0 L468.8,747.3 L465.2,747.3 L462.4,746.0 L461.3,743.9 L462.4,741.8 L465.2,740.5 L468.8,740.5 L471.6,741.8Z M470.0,734.5 L469.6,736.1 L468.6,737.2 L467.4,737.2 L466.4,736.1 L466.0,734.5 L466.4,732.9 L467.4,731.8 L468.6,731.8 L469.6,732.9Z M439.8,894.6 L438.3,899.2 L434.4,902.1 L429.6,902.1 L425.7,899.2 L424.2,894.6 L425.7,890.0 L429.6,887.1 L434.4,887.1 L438.3,890.0Z M803.0,172.0 L802.5,173.8 L801.3,174.9 L799.7,174.9 L798.5,173.8 L798.0,172.0 L798.5,170.2 L799.7,169.1 L801.3,169.1 L802.5,170.2Z M827.2,157.4 L827.0,158.0 L826.4,158.4 L825.6,158.4 L825.0,158.0 L824.8,157.4 L825.0,156.8 L825.6,156.4 L826.4,156.4 L827.0,156.8Z M882.6,134.5 L882.3,135.1 L881.5,135.5 L880.5,135.5 L879.7,135.1 L879.4,134.5 L879.7,133.9 L880.5,133.5 L881.5,133.5 L882.3,133.9Z M888.9,136.0 L888.7,136.5 L888.3,136.8 L887.7,136.8 L887.3,136.5 L887.1,136.0 L887.3,135.5 L887.7,135.2 L888.3,135.2 L888.7,135.5Z M116.2,796.2 L115.5,798.4 L113.6,799.8 L111.2,799.8 L109.3,798.4 L108.6,796.2 L109.3,794.0 L111.2,792.6 L113.6,792.6 L115.5,794.0Z M311.5,851.0 L311.0,852.1 L309.8,852.7 L308.2,852.7 L307.0,852.1 L306.5,851.0 L307.0,849.9 L308.2,849.3 L309.8,849.3 L311.0,849.9Z M161.5,288.5 L160.6,290.6 L158.4,291.8 L155.6,291.8 L153.4,290.6 L152.5,288.5 L153.4,286.4 L155.6,285.2 L158.4,285.2 L160.6,286.4Z M169.0,299.0 L168.0,302.8 L165.5,305.2 L162.5,305.2 L160.0,302.8 L159.0,299.0 L160.0,295.2 L162.5,292.8 L165.5,292.8 L168.0,295.2Z M984.0,42.8 L981.5,44.4 L975.0,45.5 L967.0,45.5 L960.5,44.4 L958.0,42.8 L960.5,41.2 L967.0,40.1 L975.0,40.1 L981.5,41.2Z M1191.0,0.0 L1190.8,0.6 L1190.3,1.0 L1189.7,1.0 L1189.2,0.6 L1189.0,0.0 L1189.2,-0.6 L1189.7,-1.0 L1190.3,-1.0 L1190.8,-0.6Z"/></clipPath>
<g clip-path="url(#landclip)">
<path d="M300,40 L505,36 L560,100 L540,140 L470,120 L430,90 L370,75 L320,60Z" fill="#e8e4b0" opacity="0.45" filter="url(#bl8)"/><path d="M500,36 L628,36 L640,90 L670,130 L720,175 L760,215 L790,260 L830,300 L870,330 L900,360 L880,380 L860,420 L870,470 L900,520 L950,540 L965,580 L940,605 L905,640 L890,690 L840,720 L830,690 L840,650 L850,560 L835,500 L805,460 L760,440 L740,390 L700,345 L650,300 L600,270 L560,240 L520,190 L510,130Z" fill="#e8e4b0" opacity="0.85" filter="url(#bl8)"/><path d="M850,300 L900,310 L960,335 L1010,365 L1000,385 L950,380 L900,365 L860,335Z" fill="#e8e4b0" opacity="0.8" filter="url(#bl8)"/><path d="M815,207 L865,205 L868,225 L845,240 L815,228Z" fill="#e8e4b0" opacity="0.8" filter="url(#bl8)"/><path d="M95,120 L160,110 L160,200 L150,250 L120,255 L95,210Z" fill="#e8e4b0" opacity="0.8" filter="url(#bl8)"/><path d="M110,350 L185,355 L190,470 L175,560 L140,560 L120,470 L95,400Z" fill="#e8e4b0" opacity="0.75" filter="url(#bl8)"/><path d="M545,740 L780,720 L760,800 L740,880 L700,880 L640,840 L580,800 L545,770Z" fill="#e8e4b0" opacity="0.75" filter="url(#bl8)"/><path d="M1040,36 L1172,36 L1172,170 L1120,135 L1060,100Z" fill="#e8e4b0" opacity="0.85" filter="url(#bl8)"/><path d="M100,885 L250,860 L250,988 L100,988Z" fill="#e8e4b0" opacity="0.6" filter="url(#bl8)"/>
<g filter="url(#bl8)" opacity="0.6"><path d="M660,110 L700,150 L740,190 L745,210 L700,210 L660,170 L640,130Z" fill="#a0cb8e"/><path d="M480,125 L530,190 L555,255 L520,280 L475,210Z" fill="#a0cb8e"/><path d="M440,170 L520,250 L545,292 L500,270 L455,225 L440,200Z" fill="#a0cb8e"/><path d="M345,110 L440,185 L480,235 L420,190 L345,125Z" fill="#a0cb8e"/><path d="M640,305 L690,330 L715,370 L660,355 L640,330Z" fill="#a0cb8e"/><path d="M770,240 L840,245 L880,290 L860,300 L800,290 L770,270Z" fill="#a0cb8e"/><path d="M880,290 L1050,370 L1050,420 L1000,380 L920,320Z" fill="#a0cb8e"/><path d="M910,380 L960,400 L940,430 L905,460 L900,420Z" fill="#a0cb8e"/><path d="M100,470 L150,540 L150,575 L110,580 L95,520Z" fill="#a0cb8e"/><path d="M720,790 L760,790 L760,830 L720,830Z" fill="#a0cb8e"/><path d="M655,110 L720,160 L770,195 L740,200 L690,165 L650,125Z" fill="#a0cb8e"/><path d="M845,470 L875,520 L880,560 L862,565 L850,520Z" fill="#a0cb8e"/><path d="M860,610 L915,620 L905,665 L870,660Z" fill="#a0cb8e"/></g>
<path d="M100,122 L140,118 L155,150 L148,200 L142,240 L125,250 L105,215 L95,170Z" fill="#000" filter="url(#mtn)" opacity="1"/><path d="M135,432 L165,428 L178,460 L172,500 L150,500 L135,470Z" fill="#000" filter="url(#mtn)" opacity="1.0"/><path d="M100,395 L122,385 L126,405 L108,425Z" fill="#000" filter="url(#mtn)" opacity="0.7"/><path d="M505,36 L600,36 L620,80 L590,110 L545,120 L520,90Z" fill="#000" filter="url(#mtn)" opacity="1"/><path d="M535,125 L615,118 L660,160 L690,215 L700,260 L670,265 L620,230 L570,200 L540,160Z" fill="#000" filter="url(#mtn)" opacity="1"/><path d="M525,235 L600,250 L615,285 L560,282Z" fill="#000" filter="url(#mtn)" opacity="0.6"/><path d="M650,250 L715,262 L720,290 L700,300 L660,285Z" fill="#000" filter="url(#mtn)" opacity="0.7"/><path d="M700,300 L740,300 L790,345 L800,380 L760,380 L720,330Z" fill="#000" filter="url(#mtn)" opacity="0.55"/><path d="M770,380 L830,375 L870,410 L870,470 L840,470 L790,440Z" fill="#000" filter="url(#mtn)" opacity="1"/><path d="M735,350 L775,360 L790,400 L752,405Z" fill="#000" filter="url(#mtn)" opacity="0.7"/><path d="M880,525 L920,528 L940,570 L930,595 L895,590 L880,560Z" fill="#000" filter="url(#mtn)" opacity="1"/><path d="M875,645 L905,650 L900,690 L880,680Z" fill="#000" filter="url(#mtn)" opacity="1"/><path d="M822,700 L860,703 L865,735 L830,740Z" fill="#000" filter="url(#mtn)" opacity="1"/><path d="M630,740 L700,728 L760,725 L775,745 L740,760 L670,765 L630,762Z" fill="#000" filter="url(#mtn)" opacity="1"/><path d="M560,762 L610,760 L615,790 L565,790Z" fill="#000" filter="url(#mtn)" opacity="0.7"/><path d="M1060,36 L1172,36 L1172,160 L1140,130 L1110,100 L1075,65Z" fill="#000" filter="url(#mtn)" opacity="1"/><path d="M368,50 L402,50 L400,78 L375,78Z" fill="#000" filter="url(#mtn)" opacity="0.6"/><path d="M808,210 L855,205 L862,222 L835,236 L810,228Z" fill="#000" filter="url(#mtn)" opacity="0.5"/><path d="M95,960 L110,955 L115,975 L98,980Z" fill="#000" filter="url(#mtn)" opacity="0.5"/><path d="M88,565 L112,562 L116,600 L92,608Z" fill="#000" filter="url(#mtn)" opacity="0.5"/><path d="M828,455 L880,460 L900,490 L885,515 L850,505Z" fill="#000" filter="url(#mtn)" opacity="0.8"/><path d="M850,515 L880,520 L885,595 L862,590Z" fill="#000" filter="url(#mtn)" opacity="0.55"/>
<ellipse cx="747.6" cy="767.5" rx="10.5" ry="11.5" fill="none" stroke="#c9a262" stroke-width="6" filter="url(#bl3)"/>
<g filter="url(#bl3)"><ellipse cx="871" cy="477" rx="4" ry="3" fill="#fbfbf8"/><ellipse cx="612" cy="128" rx="9" ry="5" fill="#fbfbf8"/><ellipse cx="590" cy="160" rx="10" ry="8" fill="#fbfbf8"/><ellipse cx="654" cy="172" rx="6" ry="10" fill="#fbfbf8"/><ellipse cx="632" cy="203" rx="10" ry="9" fill="#fbfbf8"/><ellipse cx="676" cy="266" rx="6" ry="4" fill="#fbfbf8"/><ellipse cx="548" cy="60" rx="4" ry="8" fill="#fbfbf8"/><ellipse cx="124" cy="160" rx="3" ry="9" fill="#fbfbf8"/><ellipse cx="143" cy="212" rx="3" ry="5" fill="#fbfbf8"/><ellipse cx="588" cy="160" rx="7" ry="11" fill="#fbfbf8"/><ellipse cx="654" cy="176" rx="5" ry="9" fill="#fbfbf8"/><ellipse cx="635" cy="210" rx="7" ry="6" fill="#fbfbf8"/><ellipse cx="115" cy="150" rx="4" ry="10" fill="#fbfbf8"/><ellipse cx="137" cy="207" rx="4" ry="6" fill="#fbfbf8"/><ellipse cx="747.6" cy="767.5" rx="6.5" ry="8.5" fill="#fbfbf8"/><ellipse cx="841" cy="715" rx="4" ry="3" fill="#fbfbf8"/><ellipse cx="905" cy="550" rx="4" ry="6" fill="#fbfbf8"/><ellipse cx="580" cy="130" rx="5" ry="4" fill="#fbfbf8"/></g>
</g>
<path d="M433.4,105.3 L431.9,110.2 L428.1,113.2 L423.3,113.2 L419.5,110.2 L418.0,105.3 L419.5,100.4 L423.3,97.4 L428.1,97.4 L431.9,100.4Z" fill="#e0f2fd" stroke="#333" stroke-width="0.8"/>
<path d="M455.0,144.0 L454.6,145.8 L453.6,146.9 L452.4,146.9 L451.4,145.8 L451.0,144.0 L451.4,142.2 L452.4,141.1 L453.6,141.1 L454.6,142.2Z" fill="#e0f2fd" stroke="#333" stroke-width="0.8"/>
<path d="M463.2,172.3 L462.2,175.8 L459.5,178.0 L456.3,178.0 L453.6,175.8 L452.6,172.3 L453.6,168.8 L456.3,166.6 L459.5,166.6 L462.2,168.8Z" fill="#e0f2fd" stroke="#333" stroke-width="0.8"/>
<path d="M808.4,204.6 L805.8,206.7 L799.1,207.9 L790.9,207.9 L784.2,206.7 L781.6,204.6 L784.2,202.5 L790.9,201.3 L799.1,201.3 L805.8,202.5Z" fill="#e0f2fd" stroke="#333" stroke-width="0.8"/>
<path d="M834.0,205.5 L832.7,208.6 L829.2,210.4 L824.8,210.4 L821.3,208.6 L820.0,205.5 L821.3,202.4 L824.8,200.6 L829.2,200.6 L832.7,202.4Z" fill="#e0f2fd" stroke="#333" stroke-width="0.8"/>
<path d="M126.9,362.3 L126.2,364.2 L124.3,365.4 L122.1,365.4 L120.2,364.2 L119.5,362.3 L120.2,360.4 L122.1,359.2 L124.3,359.2 L126.2,360.4Z" fill="#e0f2fd" stroke="#333" stroke-width="0.8"/>
<path d="M122.5,370.8 L122.0,371.7 L120.8,372.2 L119.2,372.2 L118.0,371.7 L117.5,370.8 L118.0,369.9 L119.2,369.4 L120.8,369.4 L122.0,369.9Z" fill="#e0f2fd" stroke="#333" stroke-width="0.8"/>
<path d="M116.0,448.0 L115.1,450.1 L112.9,451.3 L110.1,451.3 L107.9,450.1 L107.0,448.0 L107.9,445.9 L110.1,444.7 L112.9,444.7 L115.1,445.9Z" fill="#e0f2fd" stroke="#333" stroke-width="0.8"/>
<path d="M148.0,516.5 L147.2,518.0 L145.2,518.9 L142.8,518.9 L140.8,518.0 L140.0,516.5 L140.8,515.0 L142.8,514.1 L145.2,514.1 L147.2,515.0Z" fill="#e0f2fd" stroke="#333" stroke-width="0.8"/>
<path d="M196.0,844.7 L194.4,847.5 L190.1,849.2 L184.9,849.2 L180.6,847.5 L179.0,844.7 L180.6,841.9 L184.9,840.2 L190.1,840.2 L194.4,841.9Z" fill="#e0f2fd" stroke="#333" stroke-width="0.8"/>
<path d="M217.0,841.8 L215.4,845.2 L211.1,847.3 L205.9,847.3 L201.6,845.2 L200.0,841.8 L201.6,838.4 L205.9,836.3 L211.1,836.3 L215.4,838.4Z" fill="#e0f2fd" stroke="#333" stroke-width="0.8"/>
<path d="M479,35 L475,59 L473,78 L459,90 L463,107 L470,121 L480,130 L485,145 L497,152 L499,164 L494,178 L487,188 L485,202 L475,214 L463,219 L459,225" fill="none" stroke="#9fcde6" stroke-width="1.3" stroke-linejoin="round"/>
<path d="M874,280 L845,310 L810,317 L810,334 L792,345 L760,341" fill="none" stroke="#9fcde6" stroke-width="1.3" stroke-linejoin="round"/>
<path d="M84,935 L118,922 L160,912 L162,924 L190,905 L213,886 L225,867 L240,851" fill="none" stroke="#9fcde6" stroke-width="1.3" stroke-linejoin="round"/>
<path d="M760,285 L770,295 L775,312 L804,319 L841,312 L853,331 L867,339 L877,348 L897,361 L926,375 L931,400 L941,412" fill="none" stroke="#8a8f88" stroke-width="0.8" stroke-linejoin="round" opacity="0.8"/>
<path d="M784,346 L794,366 L804,385 L809,404 L816,430 L830,436 L820,448 L816,457" fill="none" stroke="#8a8f88" stroke-width="0.8" stroke-linejoin="round" opacity="0.8"/>
<path d="M854,469 L864,472 L890,477 L892,462 L897,448 L916,450" fill="none" stroke="#8a8f88" stroke-width="0.8" stroke-linejoin="round" opacity="0.8"/>
<path d="M630,271 L655,254 L673,264 L708,271 L746,264" fill="none" stroke="#8a8f88" stroke-width="0.8" stroke-linejoin="round" opacity="0.8"/>
<path d="M753,250 L764,282 L774,306 L795,313" fill="none" stroke="#8a8f88" stroke-width="0.8" stroke-linejoin="round" opacity="0.8"/>
<path d="M280.0,0.0 L280.0,36.4 L279.1,44.4 L276.0,48.3 L274.4,51.5 L276.0,56.3 L280.0,57.9 L284.0,53.9 L293.5,53.9 L301.5,57.1 L305.5,61.9 L303.9,67.5 L303.9,73.1 L299.9,75.5 L304.7,77.8 L315.8,81.0 L323.8,85.8 L327.8,92.2 L330.2,96.2 L336.6,99.4 L337.5,101.0 L338.9,104.6 L341.5,109.7 L344.7,109.7 L347.8,114.8 L348.8,118.6 L349.1,121.8 L353.0,126.3 L356.8,128.2 L358.7,131.4 L367.0,132.6 L380.0,137.7 L386.8,145.0 L398.8,155.4 L406.0,168.8 L416.5,184.6 L424.0,184.6 L438.0,194.7 L448.0,202.3 L454.6,213.8 L457.0,225.2 L466.0,230.3 L478.7,241.7 L487.6,249.3 L494.0,260.0 L498.9,266.6 L514.2,271.7 L523.2,273.0 L533.4,281.9 L541.0,293.4 L544.9,297.8 L553.8,292.1 L566.6,288.3 L579.3,292.1 L592.1,298.5 L598.5,299.8 L601.0,294.7 L610.0,294.0 L617.6,298.5 L627.8,310.0 L634.2,324.0 L641.8,334.2 L644.7,339.4 L648.2,349.9 L647.0,357.0 L651.7,358.1 L652.9,353.4 L659.9,355.2 L661.1,357.5 L667.0,353.4 L675.2,352.3 L681.0,359.3 L688.0,362.8 L692.7,367.5 L691.6,372.2 L685.7,375.7 L678.7,380.4 L677.5,387.4 L684.5,385.1 L696.3,381.6 L703.3,380.4 L710.3,378.0 L716.2,376.9 L722.0,374.0 L729.1,378.0 L736.1,387.4 L742.0,399.1 L747.8,412.0 L746.6,417.9 L742.0,421.4 L740.8,430.8 L747.8,436.6 L752.5,442.5 L761.9,443.0 L767.3,449.1 L775.5,457.3 L778.3,462.8 L783.8,465.5 L792.0,466.9 L797.4,461.4 L805.6,456.0 L813.8,456.7 L819.3,462.8 L824.8,471.0 L828.9,482.0 L830.2,490.2 L831.6,501.1 L834.3,512.0 L841.2,528.4 L848.0,535.3 L853.5,542.1 L857.6,553.0 L860.3,570.0 L863.5,586.6 L868.3,603.3 L874.6,614.4 L867.5,638.3 L853.0,639.5 L841.1,644.3 L835.2,651.4 L843.5,662.2 L844.7,669.4 L838.8,683.7 L834.0,693.3 L819.6,705.3 L814.8,714.8 L814.8,729.2 L819.6,738.8 L829.2,743.5 L848.3,746.0 L860.3,743.5 L867.5,729.2 L869.9,717.2 L879.4,705.3 L889.0,693.3 L905.7,688.5 L910.5,676.5 L913.0,669.4 L910.5,643.0 L915.3,628.7 L929.7,619.1 L944.0,613.2 L958.4,610.8 L968.0,614.4 L975.1,607.2 L978.6,597.1 L971.3,591.3 L972.8,573.7 L971.3,559.0 L974.2,547.4 L961.0,537.1 L950.8,532.7 L942.0,524.0 L933.2,517.3 L921.5,517.3 L909.8,512.2 L906.9,502.0 L905.4,493.2 L910.0,485.0 L917.5,472.6 L916.3,462.0 L917.5,455.0 L925.7,446.8 L930.4,437.4 L938.6,419.8 L945.6,409.3 L952.7,402.3 L962.0,396.4 L972.6,400.0 L980.8,409.3 L992.5,415.2 L1000.0,419.8 L1010.6,424.1 L1035.5,425.6 L1049.5,428.5 L1070.0,440.0 L1100.0,470.0 L1120.0,495.0 L1128.0,470.0 L1130.0,420.0 L1110.0,395.0 L1070.0,380.0 L1049.5,371.3 L1039.9,367.7 L1025.3,360.3 L1010.6,353.0 L998.9,344.2 L991.6,336.9 L978.4,326.6 L966.6,319.3 L952.0,313.5 L941.7,310.5 L928.3,304.1 L907.9,295.2 L887.5,286.3 L869.7,278.6 L851.8,268.4 L844.1,258.2 L841.6,245.4 L849.2,237.8 L867.1,227.6 L873.5,217.4 L872.2,207.2 L867.1,200.8 L856.9,197.0 L833.9,197.0 L813.5,198.2 L793.1,200.8 L772.7,200.8 L757.4,197.0 L747.2,188.0 L729.3,181.7 L719.1,174.0 L714.0,163.8 L698.7,153.6 L688.5,140.8 L678.3,130.6 L665.5,120.4 L655.3,108.9 L640.0,80.0 L630.0,46.0 L628.0,36.0 L628.0,0.0Z M998.0,0.0 L998.0,36.7 L1005.0,41.0 L1009.4,44.5 L1040.0,80.0 L1070.0,100.0 L1086.9,109.5 L1098.6,117.6 L1106.0,124.9 L1113.2,129.3 L1117.6,133.7 L1127.9,138.1 L1136.7,142.5 L1145.5,151.3 L1154.3,152.7 L1161.6,161.5 L1170.4,170.3 L1210.0,171.0 L1210.0,0.0Z M486.3,732.0 L491.7,726.6 L502.5,719.8 L509.3,710.3 L513.4,711.7 L517.5,719.8 L521.5,726.6 L525.6,730.7 L533.7,728.0 L544.6,722.5 L545.9,714.4 L551.3,709.0 L569.0,705.6 L577.1,714.4 L585.2,721.9 L593.4,719.8 L596.1,725.2 L605.6,733.4 L613.7,737.5 L624.6,736.1 L635.3,731.7 L649.7,730.2 L669.8,731.7 L687.0,728.8 L700.0,725.6 L712.0,719.6 L724.0,713.6 L738.3,710.0 L747.8,714.8 L755.0,717.2 L767.0,712.4 L774.2,705.3 L783.7,706.5 L793.3,699.3 L802.9,695.7 L812.4,700.5 L810.0,712.4 L800.5,726.8 L791.0,741.1 L779.0,755.5 L771.8,767.5 L769.4,781.8 L766.4,790.3 L762.0,796.1 L758.4,801.2 L757.6,813.7 L759.0,824.0 L763.5,826.9 L770.8,829.8 L775.2,835.7 L769.4,837.1 L767.9,841.5 L773.7,848.8 L779.6,857.6 L784.0,866.4 L776.7,867.9 L770.8,873.7 L763.5,882.5 L759.8,891.3 L759.8,900.1 L764.2,908.2 L756.2,912.6 L751.8,907.4 L747.4,906.0 L738.6,901.6 L726.9,904.5 L716.6,901.6 L706.4,895.7 L696.1,894.3 L691.7,888.4 L687.3,879.6 L680.4,869.3 L667.6,857.8 L654.8,853.4 L638.2,852.7 L629.3,853.4 L619.1,847.6 L607.6,841.9 L594.9,829.8 L584.7,828.5 L566.8,815.1 L555.3,801.7 L540.0,801.0 L528.3,790.3 L510.7,793.0 L501.2,789.0 L487.6,779.5 L483.6,770.0 L479.5,760.5 L478.1,749.7Z M40.0,342.0 L84.4,342.3 L94.6,339.4 L104.9,326.2 L112.2,318.8 L122.5,310.0 L132.7,307.1 L135.7,298.3 L134.2,295.4 L143.0,293.2 L148.8,299.8 L154.7,301.3 L159.1,305.7 L166.4,310.0 L169.4,307.1 L175.2,311.5 L178.1,315.9 L173.7,323.2 L182.5,329.1 L185.5,330.6 L179.6,337.9 L184.0,342.3 L195.7,340.8 L192.8,349.6 L189.9,357.0 L195.7,367.2 L198.6,374.5 L202.0,388.0 L204.6,399.0 L196.8,412.5 L187.8,426.0 L185.5,439.4 L194.5,455.1 L192.3,466.4 L190.0,479.8 L190.0,502.3 L187.8,524.7 L183.3,547.2 L183.3,560.7 L178.8,574.1 L174.3,585.4 L163.0,583.1 L151.9,574.1 L140.6,572.0 L133.9,576.4 L124.9,576.4 L120.4,585.4 L120.4,596.6 L116.0,605.6 L102.5,616.8 L91.2,612.3 L84.5,614.6 L40.0,614.6Z M40.0,117.0 L84.0,117.0 L87.0,113.0 L89.6,108.0 L97.5,105.0 L102.0,101.0 L110.0,99.0 L121.0,102.0 L147.0,99.0 L153.0,97.0 L160.0,90.6 L161.0,79.5 L160.0,71.5 L156.5,62.0 L155.0,54.0 L155.0,47.5 L161.3,43.6 L166.0,47.5 L168.0,57.0 L168.5,66.7 L167.0,78.0 L166.0,94.0 L171.0,105.0 L174.0,114.5 L175.7,125.7 L176.5,141.6 L176.6,157.6 L176.7,172.7 L167.9,185.4 L161.0,196.1 L160.0,208.8 L161.0,233.2 L156.2,243.0 L150.3,246.0 L155.2,247.9 L148.4,260.0 L147.4,269.0 L144.5,275.6 L138.6,277.1 L129.8,272.0 L126.9,266.1 L118.0,263.2 L109.3,260.3 L102.0,255.9 L96.1,250.0 L95.6,247.9 L97.6,240.0 L109.3,233.2 L95.6,230.3 L88.8,227.4 L85.9,224.5 L89.8,218.6 L95.6,210.8 L97.6,203.0 L92.7,199.0 L83.9,202.0 L40.0,202.0 L40.0,186.4 L83.9,186.4 L85.9,185.9 L91.7,181.5 L87.8,174.6 L83.9,173.7 L40.0,173.7Z M40.0,872.4 L95.2,870.5 L118.0,851.4 L141.0,836.2 L160.0,830.5 L175.2,824.8 L190.5,821.0 L209.5,824.8 L211.4,832.4 L224.8,831.6 L240.0,836.2 L251.4,841.9 L243.8,851.4 L243.8,862.9 L255.2,878.1 L259.0,889.5 L255.2,897.1 L266.7,902.9 L281.9,893.3 L287.6,883.8 L304.8,878.1 L320.0,862.9 L331.4,857.1 L337.1,866.7 L342.9,883.8 L336.8,890.0 L319.0,910.3 L308.3,934.7 L298.8,938.8 L288.0,944.2 L282.5,948.3 L277.1,957.8 L274.4,965.9 L272.4,975.0 L272.0,1030.0 L40.0,1030.0Z M234.8,76.9 L238.4,74.5 L244.2,75.1 L248.9,76.9 L256.0,75.7 L260.6,73.4 L265.3,66.3 L268.8,67.5 L270.0,74.5 L268.8,79.2 L267.7,85.0 L263.0,85.0 L256.0,81.6 L248.9,81.6 L244.2,85.0 L238.4,83.9 L235.4,81.6Z M208.3,40.8 L207.8,43.7 L206.4,45.6 L204.6,45.6 L203.2,43.7 L202.7,40.8 L203.2,37.9 L204.6,36.0 L206.4,36.0 L207.8,37.9Z M234.8,105.3 L234.2,107.5 L232.6,108.9 L230.6,108.9 L229.0,107.5 L228.4,105.3 L229.0,103.1 L230.6,101.7 L232.6,101.7 L234.2,103.1Z M258.9,142.2 L258.4,144.1 L257.0,145.2 L255.4,145.2 L254.0,144.1 L253.5,142.2 L254.0,140.3 L255.4,139.2 L257.0,139.2 L258.4,140.3Z M314.7,136.0 L317.0,134.0 L321.0,140.0 L321.7,144.1 L318.0,142.0Z M337.6,126.9 L339.6,125.6 L345.9,127.5 L349.8,128.2 L351.0,135.2 L348.5,137.7 L344.7,137.7 L338.9,133.3Z M340.8,153.7 L340.6,154.8 L339.9,155.4 L339.1,155.4 L338.4,154.8 L338.2,153.7 L338.4,152.6 L339.1,152.0 L339.9,152.0 L340.6,152.6Z M524.8,337.3 L524.5,338.7 L523.6,339.5 L522.4,339.5 L521.5,338.7 L521.2,337.3 L521.5,335.9 L522.4,335.1 L523.6,335.1 L524.5,335.9Z M532.0,340.0 L536.0,336.0 L541.0,335.0 L546.0,332.0 L543.0,336.0 L538.0,339.0 L534.0,345.5Z M586.8,357.0 L586.3,358.1 L584.9,358.7 L583.1,358.7 L581.7,358.1 L581.2,357.0 L581.7,355.9 L583.1,355.3 L584.9,355.3 L586.3,355.9Z M640.6,366.0 L639.4,369.0 L636.2,370.9 L632.2,370.9 L629.0,369.0 L627.8,366.0 L629.0,363.0 L632.2,361.1 L636.2,361.1 L639.4,363.0Z M648.0,362.5 L647.4,364.0 L645.9,364.9 L644.1,364.9 L642.6,364.0 L642.0,362.5 L642.6,361.0 L644.1,360.1 L645.9,360.1 L647.4,361.0Z M672.0,390.5 L671.2,391.6 L669.2,392.2 L666.8,392.2 L664.8,391.6 L664.0,390.5 L664.8,389.4 L666.8,388.8 L669.2,388.8 L671.2,389.4Z M560.0,641.0 L559.4,642.5 L557.9,643.5 L556.1,643.5 L554.6,642.5 L554.0,641.0 L554.6,639.5 L556.1,638.5 L557.9,638.5 L559.4,639.5Z M682.4,662.6 L682.0,663.8 L680.9,664.6 L679.5,664.6 L678.4,663.8 L678.0,662.6 L678.4,661.4 L679.5,660.6 L680.9,660.6 L682.0,661.4Z M706.0,659.0 L705.2,660.6 L703.2,661.6 L700.8,661.6 L698.8,660.6 L698.0,659.0 L698.8,657.4 L700.8,656.4 L703.2,656.4 L705.2,657.4Z M735.6,660.6 L734.7,662.8 L732.4,664.1 L729.6,664.1 L727.3,662.8 L726.4,660.6 L727.3,658.4 L729.6,657.1 L732.4,657.1 L734.7,658.4Z M746.7,671.0 L745.8,674.4 L743.5,676.4 L740.5,676.4 L738.2,674.4 L737.3,671.0 L738.2,667.6 L740.5,665.6 L743.5,665.6 L745.8,667.6Z M748.6,682.0 L747.9,684.4 L746.1,685.9 L743.9,685.9 L742.1,684.4 L741.4,682.0 L742.1,679.6 L743.9,678.1 L746.1,678.1 L747.9,679.6Z M759.0,649.5 L758.5,650.7 L757.3,651.4 L755.7,651.4 L754.5,650.7 L754.0,649.5 L754.5,648.3 L755.7,647.6 L757.3,647.6 L758.5,648.3Z M774.6,629.4 L773.9,631.4 L772.1,632.6 L769.9,632.6 L768.1,631.4 L767.4,629.4 L768.1,627.4 L769.9,626.2 L772.1,626.2 L773.9,627.4Z M441.9,738.7 L441.4,741.2 L440.2,742.8 L438.6,742.8 L437.4,741.2 L436.9,738.7 L437.4,736.2 L438.6,734.6 L440.2,734.6 L441.4,736.2Z M472.7,743.9 L471.6,746.0 L468.8,747.3 L465.2,747.3 L462.4,746.0 L461.3,743.9 L462.4,741.8 L465.2,740.5 L468.8,740.5 L471.6,741.8Z M470.0,734.5 L469.6,736.1 L468.6,737.2 L467.4,737.2 L466.4,736.1 L466.0,734.5 L466.4,732.9 L467.4,731.8 L468.6,731.8 L469.6,732.9Z M439.8,894.6 L438.3,899.2 L434.4,902.1 L429.6,902.1 L425.7,899.2 L424.2,894.6 L425.7,890.0 L429.6,887.1 L434.4,887.1 L438.3,890.0Z M803.0,172.0 L802.5,173.8 L801.3,174.9 L799.7,174.9 L798.5,173.8 L798.0,172.0 L798.5,170.2 L799.7,169.1 L801.3,169.1 L802.5,170.2Z M827.2,157.4 L827.0,158.0 L826.4,158.4 L825.6,158.4 L825.0,158.0 L824.8,157.4 L825.0,156.8 L825.6,156.4 L826.4,156.4 L827.0,156.8Z M882.6,134.5 L882.3,135.1 L881.5,135.5 L880.5,135.5 L879.7,135.1 L879.4,134.5 L879.7,133.9 L880.5,133.5 L881.5,133.5 L882.3,133.9Z M888.9,136.0 L888.7,136.5 L888.3,136.8 L887.7,136.8 L887.3,136.5 L887.1,136.0 L887.3,135.5 L887.7,135.2 L888.3,135.2 L888.7,135.5Z M116.2,796.2 L115.5,798.4 L113.6,799.8 L111.2,799.8 L109.3,798.4 L108.6,796.2 L109.3,794.0 L111.2,792.6 L113.6,792.6 L115.5,794.0Z M311.5,851.0 L311.0,852.1 L309.8,852.7 L308.2,852.7 L307.0,852.1 L306.5,851.0 L307.0,849.9 L308.2,849.3 L309.8,849.3 L311.0,849.9Z M161.5,288.5 L160.6,290.6 L158.4,291.8 L155.6,291.8 L153.4,290.6 L152.5,288.5 L153.4,286.4 L155.6,285.2 L158.4,285.2 L160.6,286.4Z M169.0,299.0 L168.0,302.8 L165.5,305.2 L162.5,305.2 L160.0,302.8 L159.0,299.0 L160.0,295.2 L162.5,292.8 L165.5,292.8 L168.0,295.2Z M984.0,42.8 L981.5,44.4 L975.0,45.5 L967.0,45.5 L960.5,44.4 L958.0,42.8 L960.5,41.2 L967.0,40.1 L975.0,40.1 L981.5,41.2Z M1191.0,0.0 L1190.8,0.6 L1190.3,1.0 L1189.7,1.0 L1189.2,0.6 L1189.0,0.0 L1189.2,-0.6 L1189.7,-1.0 L1190.3,-1.0 L1190.8,-0.6Z" fill="none" stroke="#1e1e1e" stroke-width="1.1" stroke-linejoin="round"/>
<path d="M180,36 L190,54" fill="none" stroke="#333" stroke-width="0.9"/>
<path d="M202,96 L206,120" fill="none" stroke="#333" stroke-width="0.9"/>
<path d="M122,281 L147,288 L161,272" fill="none" stroke="#333" stroke-width="0.9"/>
<line x1="223.5" y1="35" x2="223.5" y2="988" stroke="#3a3f44" stroke-width="1.4"/>
<line x1="485.9" y1="35" x2="485.9" y2="988" stroke="#3a3f44" stroke-width="1.4"/>
<line x1="748.5" y1="35" x2="748.5" y2="988" stroke="#3a3f44" stroke-width="1.4"/>
<line x1="1010.7" y1="35" x2="1010.7" y2="988" stroke="#3a3f44" stroke-width="1.4"/>
<line x1="83" y1="118.8" x2="1172" y2="118.8" stroke="#3a3f44" stroke-width="1.6"/>
<line x1="83" y1="466.2" x2="1172" y2="466.2" stroke="#3a3f44" stroke-width="1.6"/>
<line x1="83" y1="801.4" x2="1172" y2="801.4" stroke="#3a3f44" stroke-width="1.6"/>
</g>
<rect x="73.5" y="26.5" width="1108.0" height="971.0" fill="none" stroke="#111" stroke-width="1.2"/>
<rect x="223.5" y="26.5" width="262.4" height="9.0" fill="#000"/>
<rect x="223.5" y="987.5" width="262.4" height="10.0" fill="#000"/>
<rect x="748.5" y="26.5" width="262.20000000000005" height="9.0" fill="#000"/>
<rect x="748.5" y="987.5" width="262.20000000000005" height="10.0" fill="#000"/>
<rect x="73.5" y="118.8" width="10.0" height="347.4" fill="#000"/>
<rect x="1171.5" y="118.8" width="10.0" height="347.4" fill="#000"/>
<rect x="73.5" y="801.4" width="10.0" height="186.10000000000002" fill="#000"/>
<rect x="1171.5" y="801.4" width="10.0" height="186.10000000000002" fill="#000"/>
<rect x="83.5" y="35.5" width="1088.0" height="952.0" fill="none" stroke="#111" stroke-width="1.2"/>
<path d="M73.5,35.5H1181.5M73.5,987.5H1181.5M83.5,26.5V997.5M1171.5,26.5V997.5" stroke="#111" stroke-width="1.2" fill="none"/>
<text x="223.5" y="16.3" font-size="22.7" text-anchor="middle">10°00'</text>
<text x="223.5" y="1023.3" font-size="22.7" text-anchor="middle">10°00'</text>
<text x="485.9" y="16.3" font-size="22.7" text-anchor="middle">12°30'</text>
<text x="485.9" y="1023.3" font-size="22.7" text-anchor="middle">12°30'</text>
<text x="748.5" y="16.3" font-size="22.7" text-anchor="middle">15°00'</text>
<text x="748.5" y="1023.3" font-size="22.7" text-anchor="middle">15°00'</text>
<text x="1010.7" y="16.3" font-size="22.7" text-anchor="middle">17°30'</text>
<text x="1010.7" y="1023.3" font-size="22.7" text-anchor="middle">17°30'</text>
<text x="64.5" y="127.1" font-size="22.7" text-anchor="end">42°30'</text>
<text x="1189.5" y="127.1" font-size="22.7">42°30'</text>
<text x="64.5" y="474.5" font-size="22.7" text-anchor="end">40°00'</text>
<text x="1189.5" y="474.5" font-size="22.7">40°00'</text>
<text x="64.5" y="809.6999999999999" font-size="22.7" text-anchor="end">37°30'</text>
<text x="1189.5" y="809.6999999999999" font-size="22.7">37°30'</text>
<circle cx="484" cy="204.1" r="6.3" fill="#d9a473" stroke="#2a2a2a" stroke-width="1"/>
<circle cx="671" cy="349" r="4.4" fill="#fbeedd" stroke="#2a2a2a" stroke-width="1"/>
<circle cx="879.1" cy="560.2" r="5.3" fill="#fdeedd" stroke="#2a2a2a" stroke-width="1"/>
<circle cx="885.7" cy="605.6" r="4.4" fill="#fdeedd" stroke="#2a2a2a" stroke-width="1"/>
<circle cx="914.8" cy="613.5" r="4.6" fill="#f5d3a0" stroke="#2a2a2a" stroke-width="1"/>
<circle cx="806" cy="711.1" r="6" fill="#fdeedd" stroke="#2a2a2a" stroke-width="1"/>
<circle cx="816.4" cy="720.3" r="5.1" fill="#f5d3a0" stroke="#2a2a2a" stroke-width="1"/>
<circle cx="575.9" cy="720.2" r="4.5" fill="#fbeedd" stroke="#2a2a2a" stroke-width="1"/>
<path d="M337.9,84.3 L343.1,84.3 L340.5,79.8Z" fill="#000"/>
<path d="M442.3,132.1 L447.5,132.1 L444.9,127.6Z" fill="#000"/>
<path d="M578.0,140.9 L583.2,140.9 L580.6,136.4Z" fill="#000"/>
<path d="M481.4,205.9 L486.6,205.9 L484.0,201.4Z" fill="#000"/>
<path d="M571.4,242.5 L576.6,242.5 L574.0,238.0Z" fill="#000"/>
<path d="M710.4,253.5 L715.6,253.5 L713.0,249.0Z" fill="#000"/>
<path d="M803.4,267.0 L808.6,267.0 L806.0,262.5Z" fill="#000"/>
<path d="M939.4,316.0 L944.6,316.0 L942.0,311.5Z" fill="#000"/>
<path d="M668.4,350.2 L673.6,350.2 L671.0,345.7Z" fill="#000"/>
<path d="M830.1,380.8 L835.3,380.8 L832.7,376.3Z" fill="#000"/>
<path d="M914.2,377.0 L919.4,377.0 L916.8,372.5Z" fill="#000"/>
<path d="M981.4,404.9 L986.6,404.9 L984.0,400.4Z" fill="#000"/>
<path d="M912.2,615.0 L917.4,615.0 L914.8,610.5Z" fill="#000"/>
<path d="M803.4,712.3 L808.6,712.3 L806.0,707.8Z" fill="#000"/>
<path d="M573.3,720.9 L578.5,720.9 L575.9,716.4Z" fill="#000"/>
<path d="M775.4,857.4 L780.6,857.4 L778.0,852.9Z" fill="#000"/>
<path d="M130.4,572.7 L135.6,572.7 L133.0,568.2Z" fill="#000"/>
<text x="340.6" y="80.1" font-size="15.4" text-anchor="middle" fill="#111" stroke="#111" stroke-width="0.2">Grosseto</text>
<text x="445.4" y="127.9" font-size="15.4" text-anchor="middle" fill="#111" stroke="#111" stroke-width="0.2">Viterbo</text>
<text x="580.1" y="136.7" font-size="15.4" text-anchor="middle" fill="#111" stroke="#111" stroke-width="0.2">L’Aquila</text>
<text x="484.1" y="201.7" font-size="15.4" text-anchor="middle" fill="#111" stroke="#111" stroke-width="0.2">Roma</text>
<text x="574.0" y="238.3" font-size="15.4" text-anchor="middle" fill="#111" stroke="#111" stroke-width="0.2">Frosinone</text>
<text x="713.0" y="249.3" font-size="15.4" text-anchor="middle" fill="#111" stroke="#111" stroke-width="0.2">Campobasso</text>
<text x="806.3" y="262.8" font-size="15.4" text-anchor="middle" fill="#111" stroke="#111" stroke-width="0.2">Foggia</text>
<text x="942.3" y="311.8" font-size="15.4" text-anchor="middle" fill="#111" stroke="#111" stroke-width="0.2">Bari</text>
<text x="671.0" y="346" font-size="15.4" text-anchor="middle" fill="#111" stroke="#111" stroke-width="0.2">Napoli</text>
<text x="833.1" y="376.6" font-size="15.4" text-anchor="middle" fill="#111" stroke="#111" stroke-width="0.2">Potenza</text>
<text x="917.0" y="372.8" font-size="15.4" text-anchor="middle" fill="#111" stroke="#111" stroke-width="0.2">Matera</text>
<text x="984.6" y="400.7" font-size="15.4" text-anchor="middle" fill="#111" stroke="#111" stroke-width="0.2">Taranto</text>
<text x="914.7" y="610.8" font-size="15.4" text-anchor="middle" fill="#111" stroke="#111" stroke-width="0.2">Catanzaro</text>
<text x="805.6" y="708.1" font-size="15.4" text-anchor="middle" fill="#111" stroke="#111" stroke-width="0.2">Messina</text>
<text x="575.8" y="716.7" font-size="15.4" text-anchor="middle" fill="#111" stroke="#111" stroke-width="0.2">Palermo</text>
<text x="778.2" y="853.2" font-size="15.4" text-anchor="middle" fill="#111" stroke="#111" stroke-width="0.2">Siracusa</text>
<text x="131.7" y="568.5" font-size="15.4" text-anchor="middle" fill="#111" stroke="#111" stroke-width="0.2">Cagliari</text>
<path d="M595.70,540.90 L601.27,558.04 L619.29,558.04 L604.71,568.63 L610.28,585.76 L595.70,575.17 L581.12,585.76 L586.69,568.63 L572.11,558.04 L590.13,558.04Z M595.70,553.20 L598.51,561.84 L607.59,561.84 L600.24,567.18 L603.05,575.81 L595.70,570.47 L588.35,575.81 L591.16,567.18 L583.81,561.84 L592.89,561.84Z" fill="#000" fill-rule="evenodd"/>
<rect x="542.8" y="46.4" width="610.6" height="61.9" fill="#fff" stroke="#000" stroke-width="1.2"/>
<text x="547.4" y="59.9" font-size="12.2" fill="#111">Terremoto del 28-10-2016 22:02:43 (ora locale) ML=5.8 Prof=481 km</text>
<text x="547.4" y="75" font-size="12.2" fill="#111">Vibrazione dei mobili</text>
<text x="547.4" y="90" font-size="12.2" fill="#111">Dati non verificati estratti da 64 questionari compilati tramite Internet, relativi a comuni con almeno 3 questionari.</text>
<text x="547.4" y="104.3" font-size="12.2" fill="#111">Aggiornato il: 19-12-2025 07:10 (ora locale)</text>
<rect x="1051.4" y="171.4" width="101" height="435" fill="#fff" stroke="#000" stroke-width="1.2"/>
<text x="1100.1" y="184" font-weight="bold" font-size="12.8" text-anchor="middle" fill="#111" textLength="86.8" lengthAdjust="spacingAndGlyphs">Percentuale</text>
<text x="1097.5" y="199.8" font-weight="bold" font-size="12.8" text-anchor="middle" fill="#111" textLength="13.1" lengthAdjust="spacingAndGlyphs">di</text>
<text x="1097.8" y="215.8" font-weight="bold" font-size="12.8" text-anchor="middle" fill="#111" textLength="76.2" lengthAdjust="spacingAndGlyphs">vibrazione</text>
<text x="1100.0" y="231.6" font-weight="bold" font-size="12.8" text-anchor="middle" fill="#111" textLength="23.2" lengthAdjust="spacingAndGlyphs">dei</text>
<text x="1102.2" y="247.6" font-weight="bold" font-size="12.8" text-anchor="middle" fill="#111" textLength="44.4" lengthAdjust="spacingAndGlyphs">mobili</text>
<rect x="1060.3" y="255.2" width="79.5" height="36.1" fill="#fdefdd"/>
<text x="1099.7" y="277.8" font-weight="bold" font-size="12.8" text-anchor="middle" fill="#111" textLength="54.6" lengthAdjust="spacingAndGlyphs">0 - 24%</text>
<rect x="1060.3" y="299.1" width="79.5" height="36.6" fill="#efd8b0"/>
<text x="1100.3" y="321.9" font-weight="bold" font-size="12.8" text-anchor="middle" fill="#111" textLength="63.5" lengthAdjust="spacingAndGlyphs">25 - 49%</text>
<rect x="1060.3" y="344.1" width="79.5" height="36.9" fill="#c9a77f"/>
<text x="1100.3" y="367.1" font-weight="bold" font-size="12.8" text-anchor="middle" fill="#111" textLength="63.5" lengthAdjust="spacingAndGlyphs">50 - 74%</text>
<rect x="1060.3" y="386" width="79.5" height="36.9" fill="#806850"/>
<text x="1100.2" y="408.9" font-weight="bold" font-size="12.8" text-anchor="middle" fill="#111" textLength="72.4" lengthAdjust="spacingAndGlyphs">75 - 100%</text>
<line x1="1052" y1="427.6" x2="1152" y2="427.6" stroke="#000" stroke-width="1" stroke-dasharray="2,2"/>
<line x1="1052" y1="529.6" x2="1152" y2="529.6" stroke="#000" stroke-width="1" stroke-dasharray="2,2"/>
<text x="1100.4" y="440.6" font-weight="bold" font-size="12.8" text-anchor="middle" fill="#111" textLength="56.4" lengthAdjust="spacingAndGlyphs">Numero</text>
<text x="1100.2" y="456.6" font-weight="bold" font-size="12.8" text-anchor="middle" fill="#111" textLength="90.4" lengthAdjust="spacingAndGlyphs">segnalazioni</text>
<text x="1101.4" y="541" font-weight="bold" font-size="12.8" text-anchor="middle" fill="#111" textLength="68.9" lengthAdjust="spacingAndGlyphs">Epicentro</text>
<text x="1101.3" y="556.8" font-weight="bold" font-size="12.8" text-anchor="middle" fill="#111" textLength="88.9" lengthAdjust="spacingAndGlyphs">strumentale</text>
<circle cx="1078.1" cy="466.7" r="3.8" fill="none" stroke="#111" stroke-width="1.6"/>
<circle cx="1126.1" cy="465.7" r="5.3" fill="none" stroke="#111" stroke-width="1.6"/>
<circle cx="1078.5" cy="501.6" r="8.6" fill="none" stroke="#111" stroke-width="1.6"/>
<circle cx="1126.7" cy="499.6" r="10.9" fill="none" stroke="#111" stroke-width="1.6"/>
<text x="1078.6" y="484.4" font-size="12.2" text-anchor="middle" fill="#111" textLength="21.2" lengthAdjust="spacingAndGlyphs">1-2</text>
<text x="1127.0" y="484.4" font-size="12.2" text-anchor="middle" fill="#111" textLength="19.7" lengthAdjust="spacingAndGlyphs">3-9</text>
<text x="1079.6" y="523.8" font-size="12.2" text-anchor="middle" fill="#111" textLength="36.5" lengthAdjust="spacingAndGlyphs">10-49</text>
<text x="1128.6" y="523.8" font-size="12.2" text-anchor="middle" fill="#111" textLength="26.8" lengthAdjust="spacingAndGlyphs">≥50</text>
<path d="M1100.00,569.60 L1102.02,575.82 L1108.56,575.82 L1103.27,579.66 L1105.29,585.88 L1100.00,582.04 L1094.71,585.88 L1096.73,579.66 L1091.44,575.82 L1097.98,575.82Z" fill="#fff" stroke="#111" stroke-width="1"/>
<rect x="184.9" y="932.7" width="123.1" height="5.4" fill="#000"/>
<rect x="210" y="934.1" width="23.7" height="2.7" fill="#fff"/>
<rect x="258.8" y="934.1" width="23.7" height="2.7" fill="#fff"/>
<line x1="185.4" y1="937" x2="185.4" y2="942.2" stroke="#000" stroke-width="1"/>
<line x1="210" y1="937" x2="210" y2="940" stroke="#000" stroke-width="1"/>
<line x1="233.7" y1="937" x2="233.7" y2="940" stroke="#000" stroke-width="1"/>
<line x1="258.8" y1="937" x2="258.8" y2="940" stroke="#000" stroke-width="1"/>
<line x1="282.5" y1="937" x2="282.5" y2="940" stroke="#000" stroke-width="1"/>
<line x1="307.5" y1="937" x2="307.5" y2="942.2" stroke="#000" stroke-width="1"/>
<text x="246" y="917.8" font-size="30" text-anchor="middle" fill="#000">km</text>
<text x="185.2" y="965.9" font-size="21" text-anchor="middle" fill="#000">0</text>
<text x="308" y="965.9" font-size="21" text-anchor="middle" fill="#000">100</text>
<defs><radialGradient id="gblue" cx="0.3" cy="0.25" r="0.9"><stop offset="0" stop-color="#3cb4d8"/><stop offset="0.55" stop-color="#1580b0"/><stop offset="1" stop-color="#0a4f7e"/></radialGradient><clipPath id="gclip"><circle cx="132.0" cy="78.2" r="29.8"/></clipPath></defs>
<circle cx="132.0" cy="78.2" r="29.8" fill="url(#gblue)"/>
<g clip-path="url(#gclip)">
<path d="M135.2,61.6 L141.2,47.5 L149.1,53.0 L151.5,57.0 L136.5,61.3Z" fill="#1f9e3c" stroke="#fff" stroke-width="0.7"/>
<path d="M136.5,61.6 L151.5,57.0 L152.1,64.3 L146.5,64.6 L137.8,62.3Z" fill="#e4141e" stroke="#fff" stroke-width="0.7"/>
<path d="M151.5,56.0 L156.8,59.6 L161.4,66.6 L160.1,72.6 L152.8,64.6Z" fill="#c9b9d2" stroke="#fff" stroke-width="0.7"/>
<path d="M137.8,62.6 L152.1,64.6 L145.8,71.9 L140.5,65.9Z" fill="#1f9e3c" stroke="#fff" stroke-width="0.7"/>
<path d="M134.9,62.6 L137.8,62.6 L144.5,72.6 L135.2,74.2Z" fill="#f0d600" stroke="#fff" stroke-width="0.7"/>
<path d="M146.5,71.9 L152.8,65.9 L159.8,73.2 L151.1,83.8Z" fill="#f0d600" stroke="#fff" stroke-width="0.7"/>
<path d="M134.5,74.5 L145.1,73.2 L150.5,84.5 L134.5,89.2Z" fill="#e4141e" stroke="#fff" stroke-width="0.7"/>
<path d="M151.1,85.2 L160.1,74.5 L163.0,79.2 L162.0,92.0 L153.8,94.5Z" fill="#c9b9d2" stroke="#fff" stroke-width="0.7"/>
<path d="M134.2,89.8 L151.1,85.8 L153.8,95.8 L154.0,110.0 L133.2,110.0Z" fill="#1f9e3c" stroke="#fff" stroke-width="0.7"/>
<path d="M154.1,95.1 L158.8,92.1 L156.8,98.1Z" fill="#e4141e" stroke="#fff" stroke-width="0.7"/>
<path d="M134.9,61.6 L134.5,75 L134.2,90 L133.2,108.5" fill="none" stroke="#fff" stroke-width="0.8"/>
<path d="M134.9,61.6 Q118,66 108,80 Q104,92 106,100" fill="none" stroke="#fff" stroke-width="0.8"/>
<path d="M134.9,61.6 Q126,80 118,106" fill="none" stroke="#fff" stroke-width="0.8"/>
<path d="M134.9,61.6 Q112,58 103,72" fill="none" stroke="#fff" stroke-width="0.8"/>
<path d="M128,49 Q118,56 119,70 Q122,75 134.5,75" fill="none" stroke="#fff" stroke-width="0.8"/>
<path d="M103,84 Q120,88 134.5,90" fill="none" stroke="#fff" stroke-width="0.8"/>
<path d="M110,100 Q122,104 133.5,104" fill="none" stroke="#fff" stroke-width="0.8"/>
<path d="M112,52 Q124,58 134.9,61.6" fill="none" stroke="#fff" stroke-width="0.8"/>
<path d="M126,48.5 L134.9,61.6" fill="none" stroke="#fff" stroke-width="0.8"/>
</g>
<text x="169.6" y="75.1" font-size="13.8" fill="#3a3a3a" textLength="89.4" lengthAdjust="spacingAndGlyphs" stroke="#3a3a3a" stroke-width="0.35">ISTITUTO NAZIONALE</text>
<text x="169.6" y="89.6" font-size="13.8" fill="#3a3a3a" textLength="135.9" lengthAdjust="spacingAndGlyphs" stroke="#3a3a3a" stroke-width="0.35">DI GEOFISICA E VULCANOLOGIA</text>
<defs><linearGradient id="tblue" x1="0" y1="0" x2="1" y2="0"><stop offset="0" stop-color="#0d5fb0"/><stop offset="1" stop-color="#2aa6e6"/></linearGradient><path id="ring" d="M1132.20,935.98 A44,44 0 1,1 1132.55,935.29"/></defs>
<circle cx="1093" cy="916" r="31" fill="#1a1a1a"/>
<circle cx="1094.5" cy="916" r="17.8" fill="none" stroke="#e30f1f" stroke-width="5"/>
<circle cx="1094.9" cy="916" r="8.3" fill="#e30f1f"/>
<path d="M1099,916 L1127,901.5 Q1130,900.5 1130,903.5 L1130,929 Q1130,933 1126.5,931.5 Z" fill="url(#tblue)"/>
<circle cx="1143.7" cy="916" r="10" fill="#e30f1f"/>
<text x="0" y="0" font-size="17" font-weight="bold" fill="#fff" text-anchor="middle" transform="translate(1143.7,916) rotate(90) translate(0,6)">?</text>
<text font-size="16" fill="#1a1a1a" stroke="#1a1a1a" stroke-width="0.3"><textPath href="#ring" textLength="236" lengthAdjust="spacingAndGlyphs"><tspan fill="#e30f1f">www.</tspan>haisentitoilterremoto<tspan fill="#e30f1f">.it</tspan></textPath></text>
</svg></body></html>
